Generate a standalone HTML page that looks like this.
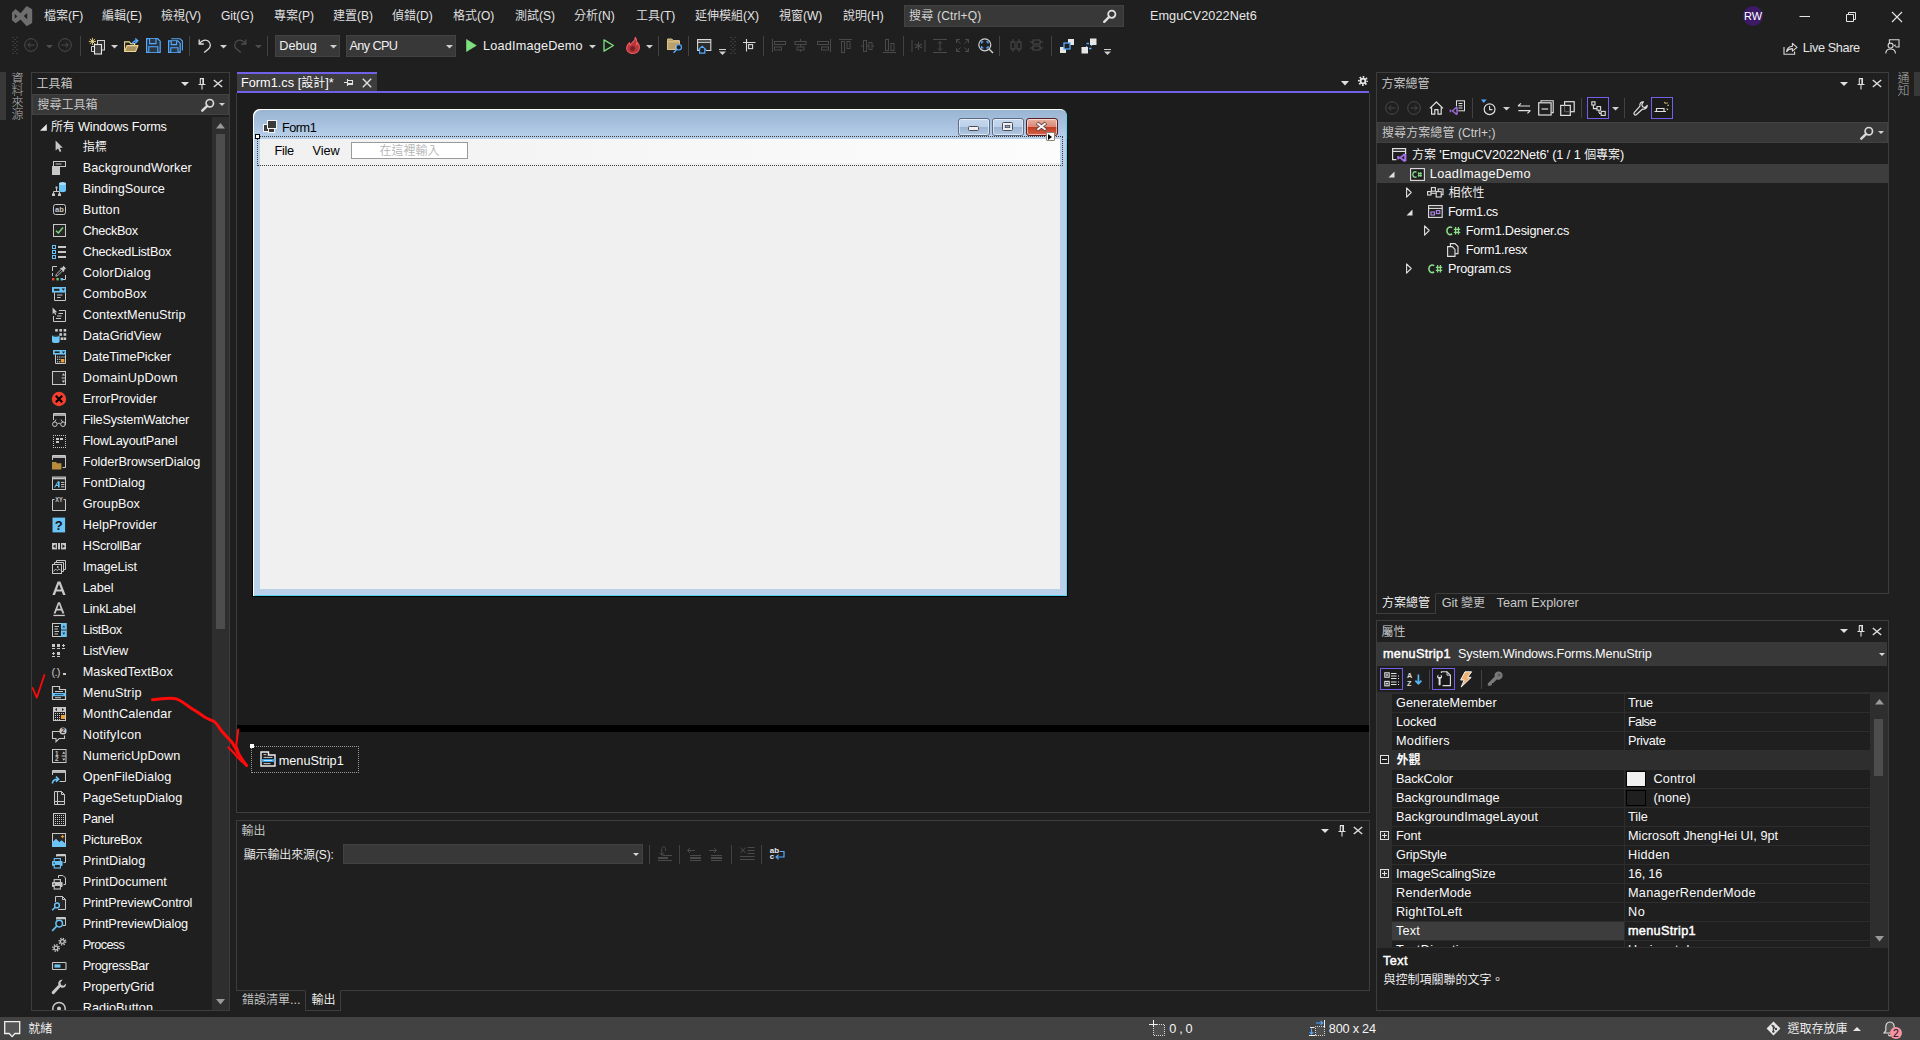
<!DOCTYPE html>
<html lang="zh-Hant"><head><meta charset="utf-8"><title>EmguCV2022Net6 - Microsoft Visual Studio</title><style>
html,body{margin:0;padding:0}
body{width:1920px;height:1040px;background:#1f1f1f;position:relative;overflow:hidden;font-family:"Liberation Sans","Noto Sans CJK TC",sans-serif;font-size:12.7px;color:#fafafa}
.a{position:absolute;box-sizing:border-box}
.t{white-space:nowrap;line-height:16px;height:16px}
.c{font-size:12px;font-weight:350}
svg{overflow:visible}
</style></head>
<body>
<svg class="a" style="left:12px;top:6px;" width="20" height="20" viewBox="0 0 20 20"><path d="M14.6 0 L20.2 3.3 V16.9 L14.6 20.2 L8.6 13.4 L3.6 17.2 L0 14.2 V6.4 L3.6 3.1 L8.6 7.2 Z M15.2 7 L11.8 10.1 L15.2 13.2 Z M2.8 8 V12.6 L5.3 10.3 Z" fill="#6e6e6e" fill-rule="evenodd"/></svg>
<span class="a t" style="left:44px;top:7.5px;color:#e6e6e6;font-size:12px;"><span class="c">檔案</span>(F)</span>
<span class="a t" style="left:102px;top:7.5px;color:#e6e6e6;font-size:12px;"><span class="c">編輯</span>(E)</span>
<span class="a t" style="left:161px;top:7.5px;color:#e6e6e6;font-size:12px;"><span class="c">檢視</span>(V)</span>
<span class="a t" style="left:221px;top:7.5px;color:#e6e6e6;font-size:12px;">Git(G)</span>
<span class="a t" style="left:274px;top:7.5px;color:#e6e6e6;font-size:12px;"><span class="c">專案</span>(P)</span>
<span class="a t" style="left:333px;top:7.5px;color:#e6e6e6;font-size:12px;"><span class="c">建置</span>(B)</span>
<span class="a t" style="left:392px;top:7.5px;color:#e6e6e6;font-size:12px;"><span class="c">偵錯</span>(D)</span>
<span class="a t" style="left:453px;top:7.5px;color:#e6e6e6;font-size:12px;"><span class="c">格式</span>(O)</span>
<span class="a t" style="left:515px;top:7.5px;color:#e6e6e6;font-size:12px;"><span class="c">測試</span>(S)</span>
<span class="a t" style="left:574px;top:7.5px;color:#e6e6e6;font-size:12px;"><span class="c">分析</span>(N)</span>
<span class="a t" style="left:636px;top:7.5px;color:#e6e6e6;font-size:12px;"><span class="c">工具</span>(T)</span>
<span class="a t" style="left:695px;top:7.5px;color:#e6e6e6;font-size:12px;"><span class="c">延伸模組</span>(X)</span>
<span class="a t" style="left:779px;top:7.5px;color:#e6e6e6;font-size:12px;"><span class="c">視窗</span>(W)</span>
<span class="a t" style="left:843px;top:7.5px;color:#e6e6e6;font-size:12px;"><span class="c">說明</span>(H)</span>
<div class="a" style="left:904px;top:5px;width:220px;height:22px;background:#383838;border:1px solid #424242;"></div>
<span class="a t" style="left:909.6px;top:7.5px;color:#d8d8d8;font-size:12px;letter-spacing:0.186px;margin-left:-0.5px;"><span class="c">搜尋</span> (Ctrl+Q)</span>
<svg class="a" style="left:1103px;top:9px;" width="14" height="14" viewBox="0 0 14 14"><circle cx="8.8" cy="5.2" r="3.6" fill="none" stroke="#e0e0e0" stroke-width="1.8"/><path d="M6.2 7.8 L1.2 12.8" stroke="#e0e0e0" stroke-width="2.4" stroke-linecap="round"/></svg>
<span class="a t" style="left:1150.4px;top:7.5px;color:#e6e6e6;letter-spacing:0.079px;margin-left:-0.5px;">EmguCV2022Net6</span>
<div class="a" style="left:1743px;top:6px;width:20px;height:20px;background:#3c1a66;border-radius:50%"></div>
<span class="a t" style="left:1743px;top:8px;color:#ffffff;font-size:11px;width:20px;text-align:center">RW</span>
<svg class="a" style="left:1799px;top:10px;" width="12" height="12" viewBox="0 0 12 12"><path d="M0.5 6.5 H11" stroke="#e6e6e6" stroke-width="1"/></svg>
<svg class="a" style="left:1845px;top:10px;" width="13" height="13" viewBox="0 0 13 13"><path d="M1.5 4.5 H8.5 V11.5 H1.5 Z M3.5 4.5 V2.5 H10.5 V9.5 H8.5" fill="none" stroke="#e6e6e6" stroke-width="1"/></svg>
<svg class="a" style="left:1891px;top:11px;" width="12" height="12" viewBox="0 0 12 12"><path d="M1 1 L11 11 M11 1 L1 11" stroke="#e6e6e6" stroke-width="1.1"/></svg>
<svg class="a" style="left:12px;top:37px;" width="6" height="18" viewBox="0 0 6 18"><rect x="0.5" y="0" width="1" height="1" fill="#5a5a5a"/><rect x="4.5" y="0" width="1" height="1" fill="#5a5a5a"/><rect x="2.5" y="2" width="1" height="1" fill="#5a5a5a"/><rect x="0.5" y="4" width="1" height="1" fill="#5a5a5a"/><rect x="4.5" y="4" width="1" height="1" fill="#5a5a5a"/><rect x="2.5" y="6" width="1" height="1" fill="#5a5a5a"/><rect x="0.5" y="8" width="1" height="1" fill="#5a5a5a"/><rect x="4.5" y="8" width="1" height="1" fill="#5a5a5a"/><rect x="2.5" y="10" width="1" height="1" fill="#5a5a5a"/><rect x="0.5" y="12" width="1" height="1" fill="#5a5a5a"/><rect x="4.5" y="12" width="1" height="1" fill="#5a5a5a"/><rect x="2.5" y="14" width="1" height="1" fill="#5a5a5a"/><rect x="0.5" y="16" width="1" height="1" fill="#5a5a5a"/><rect x="4.5" y="16" width="1" height="1" fill="#5a5a5a"/></svg>
<svg class="a" style="left:24px;top:38px;" width="14" height="14" viewBox="0 0 14 14"><circle cx="7" cy="7" r="6.3" fill="none" stroke="#4d4d4d"/><path d="M10.5 7 H3.8 M6.3 4.3 L3.6 7 L6.3 9.7" fill="none" stroke="#4d4d4d"/></svg>
<svg class="a" style="left:46px;top:45px;" width="7" height="4" viewBox="0 0 7 4"><path d="M0 0 H7 L3.5 3.5 Z" fill="#4d4d4d"/></svg>
<svg class="a" style="left:58px;top:38px;" width="14" height="14" viewBox="0 0 14 14"><circle cx="7" cy="7" r="6.3" fill="none" stroke="#4d4d4d"/><path d="M3.5 7 H10.2 M7.7 4.3 L10.4 7 L7.7 9.7" fill="none" stroke="#4d4d4d"/></svg>
<div class="a" style="left:80px;top:36px;width:1px;height:20px;background:#424242;"></div>
<svg class="a" style="left:89px;top:37px;" width="17" height="18" viewBox="0 0 17 18"><path d="M3.4 0.8 V8 M-0.2 4.4 H7 M0.9 1.9 L5.9 6.9 M5.9 1.9 L0.9 6.9" stroke="#f0dc8c" stroke-width="0.9"/><rect x="8.5" y="3.5" width="7" height="9.5" fill="#2e2e2e" stroke="#d0d0d0"/><path d="M5 9.5 H2.5 V14.5 H5.5" fill="none" stroke="#d0d0d0"/><rect x="5.5" y="7.5" width="7" height="9.5" fill="#3a3a3a" stroke="#e8e8e8" stroke-width="1.1"/></svg>
<svg class="a" style="left:111px;top:45px;" width="7" height="4" viewBox="0 0 7 4"><path d="M0 0 H7 L3.5 3.5 Z" fill="#d0d0d0"/></svg>
<svg class="a" style="left:124px;top:37px;" width="16" height="16" viewBox="0 0 16 16"><path d="M0.6 14.4 V4.9 H5.4 L6.8 6.6 H10.6 V8.6" fill="none" stroke="#f0d890" stroke-width="1.1"/><path d="M0.7 14.5 L3 8.6 H14 L11.6 14.5 Z" fill="#a89060" stroke="#f0d890" stroke-width="1.1" stroke-linejoin="round"/><path d="M8.4 7.4 C8.4 5 10 3.8 13 3.8 M11.2 1.4 L13.8 3.8 L11.2 6.2" fill="none" stroke="#55aaff" stroke-width="1.4"/></svg>
<svg class="a" style="left:146px;top:38px;" width="15" height="15" viewBox="0 0 15 15"><path d="M0.6 0.6 H11.6 L14.2 3.2 V14.4 H0.6 Z" fill="#263442" stroke="#55aaff" stroke-width="1.2"/><path d="M3.6 0.8 V5.6 H10 V0.8" fill="#2a3844" stroke="#55aaff" stroke-width="1.1"/><path d="M2.8 14.2 V8.8 H11.8 V14.2" fill="#2a3844" stroke="#55aaff" stroke-width="1.1"/></svg>
<svg class="a" style="left:168px;top:38px;" width="15" height="15" viewBox="0 0 15 15"><path d="M3.2 0.7 H12 L14.4 3 V12.6" fill="none" stroke="#55aaff" stroke-width="1.1"/><path d="M0.6 2.8 H9.8 L12.2 5.2 V14.4 H0.6 Z" fill="#263442" stroke="#55aaff" stroke-width="1.2"/><path d="M3.2 3 V6.6 H8.6 V3 M2.8 14.2 V9.8 H10 V14.2" fill="#2a3844" stroke="#55aaff" stroke-width="1.1"/></svg>
<div class="a" style="left:189px;top:36px;width:1px;height:20px;background:#424242;"></div>
<svg class="a" style="left:198px;top:38px;" width="14" height="15" viewBox="0 0 14 15"><path d="M1.2 1.5 V6 H5.8" fill="none" stroke="#e0e0e0" stroke-width="1.3"/><path d="M1.6 5.6 C3.5 2.2 8 1 10.8 3.6 C13.2 6 12.6 9 10.4 11 L6.2 14.5" fill="none" stroke="#e0e0e0" stroke-width="1.3"/></svg>
<svg class="a" style="left:220px;top:45px;" width="7" height="4" viewBox="0 0 7 4"><path d="M0 0 H7 L3.5 3.5 Z" fill="#d0d0d0"/></svg>
<svg class="a" style="left:233px;top:38px;" width="14" height="15" viewBox="0 0 14 15"><path d="M12.8 1.5 V6 H8.2" fill="none" stroke="#4d4d4d" stroke-width="1.3"/><path d="M12.4 5.6 C10.5 2.2 6 1 3.2 3.6 C0.8 6 1.4 9 3.6 11 L7.8 14.5" fill="none" stroke="#4d4d4d" stroke-width="1.3"/></svg>
<svg class="a" style="left:255px;top:45px;" width="7" height="4" viewBox="0 0 7 4"><path d="M0 0 H7 L3.5 3.5 Z" fill="#4d4d4d"/></svg>
<div class="a" style="left:267px;top:36px;width:1px;height:20px;background:#424242;"></div>
<div class="a" style="left:275px;top:35px;width:65px;height:22px;background:#383838;border:1px solid #424242;"></div>
<span class="a t" style="left:279.7px;top:37.5px;color:#f0f0f0;letter-spacing:0.042px;margin-left:-0.5px;">Debug</span>
<svg class="a" style="left:330px;top:45px;" width="7" height="4" viewBox="0 0 7 4"><path d="M0 0 H7 L3.5 3.5 Z" fill="#d0d0d0"/></svg>
<div class="a" style="left:346px;top:35px;width:110px;height:22px;background:#383838;border:1px solid #424242;"></div>
<span class="a t" style="left:350px;top:37.5px;color:#f0f0f0;letter-spacing:-0.627px;margin-left:-0.5px;">Any CPU</span>
<svg class="a" style="left:446px;top:45px;" width="7" height="4" viewBox="0 0 7 4"><path d="M0 0 H7 L3.5 3.5 Z" fill="#d0d0d0"/></svg>
<svg class="a" style="left:466px;top:39px;" width="11" height="13" viewBox="0 0 11 13"><path d="M0.5 0.5 L10.3 6.5 L0.5 12.5 Z" fill="#7fe07f" stroke="#7fe07f" stroke-width="0.6" stroke-linejoin="round"/></svg>
<span class="a t" style="left:483.6px;top:37.5px;color:#f0f0f0;letter-spacing:0.181px;margin-left:-0.5px;">LoadImageDemo</span>
<svg class="a" style="left:589px;top:45px;" width="7" height="4" viewBox="0 0 7 4"><path d="M0 0 H7 L3.5 3.5 Z" fill="#d0d0d0"/></svg>
<svg class="a" style="left:603px;top:39px;" width="12" height="13" viewBox="0 0 12 13"><path d="M1 0.9 L10.4 6.5 L1 12.1 Z" fill="none" stroke="#7fe07f" stroke-width="1.3" stroke-linejoin="round"/></svg>
<svg class="a" style="left:626px;top:37px;" width="14" height="17" viewBox="0 0 14 17"><path d="M9.2 0.3 C9.6 2.4 8.4 3.6 6.8 5 C5.6 6 4.6 6.8 4.3 8 C3.6 7.4 3.4 6.6 3.5 5.6 C1.6 7.2 0.5 9.2 0.6 11.2 C0.8 14.4 3.6 16.5 7 16.5 C10.6 16.5 13.3 14.2 13.4 10.6 C13.5 8.4 12.6 6.8 11.6 5.6 C11.6 6.8 11.2 7.6 10.4 8 C11 5.2 10.8 2.2 9.2 0.3 Z" fill="#b5363c" stroke="#f05a5f" stroke-width="1.1" stroke-linejoin="round"/><ellipse cx="6.6" cy="11.6" rx="2.3" ry="2.6" fill="#7a1f26"/></svg>
<svg class="a" style="left:646px;top:45px;" width="7" height="4" viewBox="0 0 7 4"><path d="M0 0 H7 L3.5 3.5 Z" fill="#d0d0d0"/></svg>
<div class="a" style="left:658px;top:36px;width:1px;height:20px;background:#424242;"></div>
<svg class="a" style="left:667px;top:38px;" width="16" height="16" viewBox="0 0 16 16"><path d="M0.6 11.5 V1 H4.8 L6.3 2.6 H12.4 V6" fill="#b9a06c" stroke="#dcc48e"/><path d="M0.6 11.5 H8 V4 H0.6 Z" fill="#b9a06c" stroke="#dcc48e"/><path d="M0.6 3.8 H12.4 V8 H8.5 V11.5 H0.6Z" fill="#b9a06c" stroke="#dcc48e"/><circle cx="11.8" cy="9.3" r="2.7" fill="#1f1f1f" stroke="#55aaff" stroke-width="1.2"/><path d="M9.8 11.4 L6.6 14.8" stroke="#55aaff" stroke-width="1.4"/></svg>
<div class="a" style="left:688px;top:36px;width:1px;height:20px;background:#424242;"></div>
<svg class="a" style="left:697px;top:39px;" width="15" height="15" viewBox="0 0 15 15"><path d="M3 11.5 H0.6 V0.6 H13.8 V11.5 H8.6" fill="#2b2b2b" stroke="#d8d8d8" stroke-width="1.1"/><path d="M0.6 3.3 H13.8" stroke="#d8d8d8" stroke-width="1.1"/><path d="M1.4 10.6 L5.2 7.2 L9 10.6 M2.6 10 V14.2 H7.8 V10" fill="#1f1f1f" stroke="#55aaff" stroke-width="1.2"/></svg>
<svg class="a" style="left:719px;top:49px;" width="7" height="6" viewBox="0 0 7 6"><path d="M0 0.5 H7" stroke="#d0d0d0"/><path d="M0 2.5 H7 L3.5 6 Z" fill="#d0d0d0"/></svg>
<svg class="a" style="left:730px;top:37px;" width="6" height="18" viewBox="0 0 6 18"><rect x="0.5" y="0" width="1" height="1" fill="#5a5a5a"/><rect x="4.5" y="0" width="1" height="1" fill="#5a5a5a"/><rect x="2.5" y="2" width="1" height="1" fill="#5a5a5a"/><rect x="0.5" y="4" width="1" height="1" fill="#5a5a5a"/><rect x="4.5" y="4" width="1" height="1" fill="#5a5a5a"/><rect x="2.5" y="6" width="1" height="1" fill="#5a5a5a"/><rect x="0.5" y="8" width="1" height="1" fill="#5a5a5a"/><rect x="4.5" y="8" width="1" height="1" fill="#5a5a5a"/><rect x="2.5" y="10" width="1" height="1" fill="#5a5a5a"/><rect x="0.5" y="12" width="1" height="1" fill="#5a5a5a"/><rect x="4.5" y="12" width="1" height="1" fill="#5a5a5a"/><rect x="2.5" y="14" width="1" height="1" fill="#5a5a5a"/><rect x="0.5" y="16" width="1" height="1" fill="#5a5a5a"/><rect x="4.5" y="16" width="1" height="1" fill="#5a5a5a"/></svg>
<svg class="a" style="left:743px;top:39px;" width="13" height="13" viewBox="0 0 13 13"><path d="M0 3.5 H12.5 M3.5 0 V12.5" stroke="#d8d8d8" stroke-width="1.1"/><rect x="5.6" y="5.6" width="4" height="4" fill="none" stroke="#d8d8d8" stroke-width="1.1"/></svg>
<div class="a" style="left:763px;top:36px;width:1px;height:20px;background:#424242;"></div>
<svg class="a" style="left:772px;top:39px;" width="15" height="13" viewBox="0 0 15 13"><path d="M0.5 0 V13" stroke="#4a4a4a"/><rect x="2.5" y="2.5" width="11" height="3" fill="none" stroke="#4a4a4a"/><rect x="2.5" y="8" width="7" height="3" fill="none" stroke="#4a4a4a"/></svg>
<svg class="a" style="left:794px;top:39px;" width="13" height="13" viewBox="0 0 13 13"><path d="M6.5 0 V13" stroke="#4a4a4a"/><rect x="1" y="2.5" width="11" height="3" fill="#1f1f1f" stroke="#4a4a4a"/><rect x="3" y="8" width="7" height="3" fill="#1f1f1f" stroke="#4a4a4a"/></svg>
<svg class="a" style="left:816px;top:39px;" width="15" height="13" viewBox="0 0 15 13"><path d="M14.5 0 V13" stroke="#4a4a4a"/><rect x="1.5" y="2.5" width="11" height="3" fill="none" stroke="#4a4a4a"/><rect x="5.5" y="8" width="7" height="3" fill="none" stroke="#4a4a4a"/></svg>
<svg class="a" style="left:839px;top:39px;" width="13" height="14" viewBox="0 0 13 14"><path d="M0 0.5 H13" stroke="#4a4a4a"/><rect x="2.5" y="2.5" width="3" height="11" fill="none" stroke="#4a4a4a"/><rect x="8" y="2.5" width="3" height="7" fill="none" stroke="#4a4a4a"/></svg>
<svg class="a" style="left:861px;top:39px;" width="13" height="14" viewBox="0 0 13 14"><path d="M0 7 H13" stroke="#4a4a4a"/><rect x="2.5" y="1.5" width="3" height="11" fill="#1f1f1f" stroke="#4a4a4a"/><rect x="8" y="3.5" width="3" height="7" fill="#1f1f1f" stroke="#4a4a4a"/></svg>
<svg class="a" style="left:883px;top:39px;" width="13" height="14" viewBox="0 0 13 14"><path d="M0 13.5 H13" stroke="#4a4a4a"/><rect x="2.5" y="0.5" width="3" height="11" fill="none" stroke="#4a4a4a"/><rect x="8" y="4.5" width="3" height="7" fill="none" stroke="#4a4a4a"/></svg>
<div class="a" style="left:903px;top:36px;width:1px;height:20px;background:#424242;"></div>
<svg class="a" style="left:911px;top:40px;" width="15" height="12" viewBox="0 0 15 12"><path d="M1 0 V12 M14 0 V12" stroke="#4a4a4a"/><path d="M7.5 2 V10 M4 4 L11 8 M11 4 L4 8" stroke="#4a4a4a" stroke-width="1.1"/></svg>
<svg class="a" style="left:933px;top:39px;" width="14" height="14" viewBox="0 0 14 14"><path d="M0 0.5 H14 M0 13.5 H14 M7 2.5 V11.5 M5 4.5 L7 2.5 L9 4.5 M5 9.5 L7 11.5 L9 9.5" fill="none" stroke="#4a4a4a"/></svg>
<svg class="a" style="left:956px;top:39px;" width="13" height="13" viewBox="0 0 13 13"><path d="M0.5 4 V0.5 H4 M9 0.5 H12.5 V4 M12.5 9 V12.5 H9 M4 12.5 H0.5 V9 M0.5 0.5 L4.5 4.5 M12.5 0.5 L8.5 4.5 M12.5 12.5 L8.5 8.5 M0.5 12.5 L4.5 8.5" fill="none" stroke="#4a4a4a"/></svg>
<svg class="a" style="left:978px;top:38px;" width="16" height="16" viewBox="0 0 16 16"><circle cx="6.8" cy="6.8" r="6" fill="none" stroke="#d0d0d0" stroke-width="1.2"/><path d="M11 11 L15 15" stroke="#d0d0d0" stroke-width="1.4"/><path d="M3.6 5.6 V3.8 H5.4 M8.2 3.8 H10 V5.6 M10 8 V9.8 H8.2 M5.4 9.8 H3.6 V8" fill="none" stroke="#55aaff" stroke-width="1.3"/></svg>
<div class="a" style="left:999px;top:36px;width:1px;height:20px;background:#424242;"></div>
<svg class="a" style="left:1010px;top:39px;" width="12" height="13" viewBox="0 0 12 13"><path d="M3 0 V13 M9 0 V13" stroke="#4a4a4a"/><rect x="1" y="3" width="4" height="7" fill="#1f1f1f" stroke="#4a4a4a"/><rect x="7" y="3" width="4" height="7" fill="#1f1f1f" stroke="#4a4a4a"/></svg>
<svg class="a" style="left:1030px;top:39px;" width="13" height="12" viewBox="0 0 13 12"><path d="M0 3 H13 M0 9 H13" stroke="#4a4a4a"/><rect x="3" y="1" width="7" height="4" fill="#1f1f1f" stroke="#4a4a4a"/><rect x="3" y="7" width="7" height="4" fill="#1f1f1f" stroke="#4a4a4a"/></svg>
<div class="a" style="left:1051px;top:36px;width:1px;height:20px;background:#424242;"></div>
<svg class="a" style="left:1059px;top:38px;" width="16" height="16" viewBox="0 0 16 16"><rect x="9" y="1" width="6" height="6" fill="#e6e6e6"/><rect x="1" y="9" width="6" height="6" fill="#e6e6e6"/><rect x="5" y="5" width="6" height="6" fill="#1f1f1f" stroke="#55aaff" stroke-width="1.3"/></svg>
<svg class="a" style="left:1081px;top:38px;" width="16" height="16" viewBox="0 0 16 16"><rect x="5.5" y="5.5" width="5" height="5" fill="none" stroke="#55aaff" stroke-width="1.3" stroke-dasharray="2.5 2.5"/><rect x="9" y="0.5" width="6.5" height="6.5" fill="#e6e6e6"/><rect x="0.5" y="9" width="6.5" height="6.5" fill="#e6e6e6"/></svg>
<svg class="a" style="left:1104px;top:49px;" width="7" height="6" viewBox="0 0 7 6"><path d="M0 0.5 H7" stroke="#d0d0d0"/><path d="M0 2.5 H7 L3.5 6 Z" fill="#d0d0d0"/></svg>
<svg class="a" style="left:1783px;top:42px;" width="15" height="13" viewBox="0 0 15 13"><path d="M1 5 V12.3 H11.6 V9.6" fill="none" stroke="#d8d8d8" stroke-width="1.1"/><path d="M3.6 9.6 C4 6.2 6.2 4.4 9.4 4.2 V1.4 L14 5.4 L9.4 9.2 V6.6 C7 6.6 5 7.4 3.6 9.6 Z" fill="none" stroke="#d8d8d8" stroke-width="1.1" stroke-linejoin="round"/></svg>
<span class="a t" style="left:1803.3px;top:39.5px;color:#e6e6e6;letter-spacing:-0.366px;margin-left:-0.5px;">Live Share</span>
<svg class="a" style="left:1885px;top:39px;" width="15" height="15" viewBox="0 0 15 15"><path d="M4.4 5 V0.8 H14 V8 H10.6" fill="none" stroke="#d8d8d8" stroke-width="1.1"/><circle cx="5.6" cy="6.6" r="2.5" fill="#1f1f1f" stroke="#d8d8d8" stroke-width="1.1"/><path d="M0.8 14.4 C0.8 8.6 10.4 8.6 10.4 14.4" fill="none" stroke="#d8d8d8" stroke-width="1.1"/><path d="M8.6 6.6 L10.6 8 V5.2Z" fill="#d8d8d8"/></svg>
<div class="a" style="left:0px;top:72px;width:6px;height:48px;background:#383838;"></div>
<span class="a t" style="left:10px;top:72px;width:12px;height:48px;line-height:12px;font-size:12px;font-weight:300;color:#b0b0b0;writing-mode:vertical-rl;text-orientation:upright;white-space:nowrap">資料來源</span>
<div class="a" style="left:31px;top:72px;width:199px;height:939px;border:1px solid #3d3d3d;"></div>
<span class="a t" style="left:36.5px;top:75.5px;color:#d0d0d0;"><span class="c">工具箱</span></span>
<svg class="a" style="left:181px;top:81.5px;" width="8" height="4" viewBox="0 0 8 4"><path d="M0 0 H8 L4 4 Z" fill="#e0e0e0"/></svg>
<svg class="a" style="left:197.5px;top:77.5px;" width="8" height="12" viewBox="0 0 8 12"><path d="M2 0.6 H6 M2.3 0.6 V6 M5.4 0.6 V6 M0.5 6.5 H7.5 M4 6.5 V11.5" fill="none" stroke="#e0e0e0" stroke-width="1.1"/><rect x="4.4" y="1" width="1.4" height="5" fill="#e0e0e0"/></svg>
<svg class="a" style="left:213px;top:79px;" width="10" height="9" viewBox="0 0 10 9"><path d="M0.8 0.9 L9.2 8.1 M9.2 0.9 L0.8 8.1" stroke="#e0e0e0" stroke-width="1.35"/></svg>
<div class="a" style="left:32px;top:94px;width:197px;height:21px;background:#383838;border:1px solid #424242;"></div>
<span class="a t" style="left:37.5px;top:96.5px;color:#d0d0d0;"><span class="c">搜尋工具箱</span></span>
<svg class="a" style="left:200.5px;top:97.5px;" width="14" height="14" viewBox="0 0 14 14"><circle cx="8.8" cy="5.2" r="3.7" fill="none" stroke="#d8d8d8" stroke-width="1.7"/><path d="M6.2 7.8 L1.3 12.7" stroke="#d8d8d8" stroke-width="2.5" stroke-linecap="round"/></svg>
<svg class="a" style="left:219px;top:103px;" width="6" height="3" viewBox="0 0 6 3"><path d="M0 0 H6 L3 3 Z" fill="#d0d0d0"/></svg>
<div class="a" style="left:212px;top:117px;width:17px;height:893px;background:#2e2e2e;"></div>
<svg class="a" style="left:216px;top:122.5px;" width="9" height="5.5" viewBox="0 0 9 5.5"><path d="M0 5.5 L4.5 0 L9 5.5 Z" fill="#999999"/></svg>
<div class="a" style="left:216px;top:134px;width:9px;height:495px;background:#4d4d4d;"></div>
<svg class="a" style="left:216px;top:999px;" width="9" height="5.5" viewBox="0 0 9 5.5"><path d="M0 0 L4.5 5.5 L9 0 Z" fill="#999999"/></svg>
<svg class="a" style="left:39.5px;top:123.5px;" width="7" height="7" viewBox="0 0 7 7"><path d="M6.8 0 V6.8 H0 Z" fill="#e6e6e6"/></svg>
<span class="a t" style="left:51.5px;top:118.5px;color:#fafafa;letter-spacing:-0.168px;margin-left:-0.5px;"><span class="c">所有</span> Windows Forms</span>
<div class="a" style="left:0;top:0;width:212px;height:1010px;overflow:hidden"><svg class="a" style="left:51px;top:139px;" width="16" height="16" viewBox="0 0 16 16"><path d="M4.6 1.6 V11.6 L7 9.4 L8.8 13 L10.4 12.2 L8.7 8.8 H11.8 Z" fill="#c8c8c8"/></svg><span class="a t" style="left:83.25px;top:138.5px;color:#fafafa;letter-spacing:0.017px;margin-left:-0.5px;"><span class="c">指標</span></span><svg class="a" style="left:51px;top:160px;" width="16" height="16" viewBox="0 0 16 16"><rect x="2.5" y="1.5" width="12" height="5" fill="none" stroke="#c8c8c8" stroke-width="1"/><rect x="4.5" y="3.5" width="6" height="1" fill="#c8c8c8"/><rect x="1" y="6" width="8" height="9" fill="#c8c8c8"/></svg><span class="a t" style="left:83.25px;top:159.5px;color:#fafafa;letter-spacing:0.042px;margin-left:-0.5px;">BackgroundWorker</span><svg class="a" style="left:51px;top:181px;" width="16" height="16" viewBox="0 0 16 16"><path d="M8 2.5 V9.6 C8 11.8 15 11.8 15 9.6 V2.5" fill="#6cc3f5"/><ellipse cx="11.5" cy="2.6" rx="3.5" ry="1.6" fill="#a8dcfa"/><path d="M5.5 7 V10.5 M2.5 13 V10.5 H8.5 V13" fill="none" stroke="#c8c8c8" stroke-width="1"/><rect x="4.5" y="5.5" width="2" height="2" fill="#c8c8c8"/><rect x="1" y="12.5" width="3" height="2.5" fill="#c8c8c8"/><rect x="7" y="12.5" width="3" height="2.5" fill="#c8c8c8"/></svg><span class="a t" style="left:83.25px;top:180.5px;color:#fafafa;letter-spacing:-0.037px;margin-left:-0.5px;">BindingSource</span><svg class="a" style="left:51px;top:202px;" width="16" height="16" viewBox="0 0 16 16"><rect x="2.5" y="2.5" width="12" height="10" rx="2" fill="none" stroke="#c8c8c8" stroke-width="1"/><text x="8.5" y="10.3" font-size="7.5" font-weight="bold" text-anchor="middle" fill="#c8c8c8" font-family="Liberation Sans,sans-serif">ab</text></svg><span class="a t" style="left:83.25px;top:201.5px;color:#fafafa;letter-spacing:0.060px;margin-left:-0.5px;">Button</span><svg class="a" style="left:51px;top:223px;" width="16" height="16" viewBox="0 0 16 16"><rect x="2.5" y="1.5" width="12" height="12" fill="#262626" stroke="#c8c8c8"/><path d="M5 7.8 L7.4 10 L12 4.6" fill="none" stroke="#7fd67f" stroke-width="1.5"/></svg><span class="a t" style="left:83.25px;top:222.5px;color:#fafafa;letter-spacing:-0.347px;margin-left:-0.5px;">CheckBox</span><svg class="a" style="left:51px;top:244px;" width="16" height="16" viewBox="0 0 16 16"><rect x="1" y="1" width="4" height="4" fill="#6cc3f5"/><rect x="2" y="2" width="2" height="2" fill="#1f1f1f"/><rect x="7" y="2" width="8" height="2" fill="#c8c8c8"/><rect x="1" y="6" width="4" height="4" fill="#6cc3f5"/><rect x="2" y="7" width="2" height="2" fill="#1f1f1f"/><rect x="7" y="7" width="8" height="2" fill="#c8c8c8"/><rect x="1" y="11" width="4" height="4" fill="#6cc3f5"/><rect x="2" y="12" width="2" height="2" fill="#1f1f1f"/><rect x="7" y="12" width="8" height="2" fill="#c8c8c8"/></svg><span class="a t" style="left:83.25px;top:243.5px;color:#fafafa;letter-spacing:-0.242px;margin-left:-0.5px;">CheckedListBox</span><svg class="a" style="left:51px;top:265px;" width="16" height="16" viewBox="0 0 16 16"><path d="M1.5 6 V1.5 H6 M14.5 10 V14.5 H11" fill="none" stroke="#c8c8c8" stroke-width="1"/><path d="M1.5 8 V11" fill="none" stroke="#c8c8c8" stroke-width="1"/><path d="M12.5 0.8 L15 3.4 L13 5 L13.6 5.8 L12.4 7 L9 3.6 L10.2 2.4 L11 3 Z" fill="#c8c8c8"/><path d="M10 4.6 L5.4 9.2 L4.8 11.2 L6.8 10.6 L11.4 6" fill="#1f1f1f" stroke="#c8c8c8" stroke-width="0.9"/><rect x="1" y="13" width="2.4" height="2.4" fill="#f04040"/><rect x="5.4" y="13" width="2.4" height="2.4" fill="#5fd05f"/><rect x="9.6" y="13" width="2.4" height="2.4" fill="#6cc3f5"/></svg><span class="a t" style="left:83.25px;top:264.5px;color:#fafafa;letter-spacing:0.182px;margin-left:-0.5px;">ColorDialog</span><svg class="a" style="left:51px;top:286px;" width="16" height="16" viewBox="0 0 16 16"><rect x="1" y="1" width="14" height="5.6" fill="#6cc3f5"/><rect x="3" y="2.8" width="5.5" height="2" fill="#1f1f1f"/><path d="M10.6 2.6 H14 L12.3 4.8 Z" fill="#1f1f1f"/><path d="M3.5 6.5 V14.5 H14.5 V6.5" fill="none" stroke="#c8c8c8" stroke-width="1"/><path d="M6 9 H11.5 M6 11.5 H9.5" fill="none" stroke="#c8c8c8" stroke-width="1"/></svg><span class="a t" style="left:83.25px;top:285.5px;color:#fafafa;letter-spacing:0.161px;margin-left:-0.5px;">ComboBox</span><svg class="a" style="left:51px;top:307px;" width="16" height="16" viewBox="0 0 16 16"><path d="M8 3.5 H14.5 V14.5 H2.5 V9" fill="none" stroke="#c8c8c8" stroke-width="1"/><path d="M7.5 6.5 H12 M6 9 H10.5 M5 11.5 H10" fill="none" stroke="#c8c8c8" stroke-width="1"/><path d="M1.6 0.6 V7 L3.1 5.7 L4.3 8 L5.3 7.5 L4.2 5.3 H6.2 Z" fill="#c8c8c8"/></svg><span class="a t" style="left:83.25px;top:306.5px;color:#fafafa;letter-spacing:0.077px;margin-left:-0.5px;">ContextMenuStrip</span><svg class="a" style="left:51px;top:328px;" width="16" height="16" viewBox="0 0 16 16"><rect x="4.2" y="1" width="2.6" height="2.6" fill="#c8c8c8"/><rect x="8.4" y="1" width="2.6" height="2.6" fill="#c8c8c8"/><rect x="12.6" y="1" width="2.6" height="2.6" fill="#c8c8c8"/><rect x="12.6" y="5.2" width="2.6" height="2.6" fill="#c8c8c8"/><rect x="8.4" y="5.2" width="2.6" height="2.6" fill="#c8c8c8"/><rect x="12.6" y="9.4" width="2.6" height="2.6" fill="#c8c8c8"/><rect x="9.6" y="9.4" width="2.6" height="2.6" fill="#c8c8c8"/><path d="M1 7.5 V13.4 C1 15.6 8.6 15.6 8.6 13.4 V7.5" fill="#6cc3f5"/><ellipse cx="4.8" cy="7.6" rx="3.3" ry="1.3" fill="#1f1f1f" opacity="0.75"/></svg><span class="a t" style="left:83.25px;top:327.5px;color:#fafafa;letter-spacing:0.021px;margin-left:-0.5px;">DataGridView</span><svg class="a" style="left:51px;top:349px;" width="16" height="16" viewBox="0 0 16 16"><rect x="2" y="1" width="13" height="4.6" fill="#6cc3f5"/><rect x="3.6" y="2.4" width="5" height="1.6" fill="#1f1f1f"/><path d="M10.8 2.4 H14 L12.4 4.4 Z" fill="#1f1f1f"/><path d="M4.5 5.5 V14.5 H14.5 V5.5" fill="none" stroke="#c8c8c8" stroke-width="1"/><rect x="10" y="10" width="3.4" height="3.4" fill="#f0a030"/><rect x="6" y="7.4" width="1.2" height="1.2" fill="#c8c8c8"/><rect x="8.2" y="7.4" width="1.2" height="1.2" fill="#c8c8c8"/><rect x="10.4" y="7.4" width="1.2" height="1.2" fill="#c8c8c8"/><rect x="12.4" y="7.4" width="1.2" height="1.2" fill="#c8c8c8"/><rect x="6" y="9.8" width="1.2" height="1.2" fill="#c8c8c8"/><rect x="8.2" y="9.8" width="1.2" height="1.2" fill="#c8c8c8"/><rect x="6" y="12.2" width="1.2" height="1.2" fill="#c8c8c8"/><rect x="8.2" y="12.2" width="1.2" height="1.2" fill="#c8c8c8"/></svg><span class="a t" style="left:83.25px;top:348.5px;color:#fafafa;letter-spacing:-0.106px;margin-left:-0.5px;">DateTimePicker</span><svg class="a" style="left:51px;top:370px;" width="16" height="16" viewBox="0 0 16 16"><rect x="1.5" y="1.5" width="13" height="13" fill="#2a2a2a" stroke="#c8c8c8"/><path d="M10.5 8 H14.5" fill="none" stroke="#c8c8c8" stroke-width="1"/><path d="M10.8 5.6 H14.2 L12.5 3.2 Z M10.8 10.4 H14.2 L12.5 12.8 Z" fill="#c8c8c8"/><path d="M10 2 V14" stroke="#1f1f1f" stroke-width="0.6"/></svg><span class="a t" style="left:83.25px;top:369.5px;color:#fafafa;letter-spacing:0.223px;margin-left:-0.5px;">DomainUpDown</span><svg class="a" style="left:51px;top:391px;" width="16" height="16" viewBox="0 0 16 16"><circle cx="8" cy="8" r="7.2" fill="#f43e30"/><path d="M4.8 4.8 L11.2 11.2 M11.2 4.8 L4.8 11.2" stroke="#000" stroke-width="2.1"/></svg><span class="a t" style="left:83.25px;top:390.5px;color:#fafafa;letter-spacing:-0.107px;margin-left:-0.5px;">ErrorProvider</span><svg class="a" style="left:51px;top:412px;" width="16" height="16" viewBox="0 0 16 16"><path d="M2.5 8 V1.5 H14.5 V12.5 H13.6" fill="none" stroke="#c8c8c8" stroke-width="1"/><path d="M2.5 3 H14.5" fill="none" stroke="#c8c8c8" stroke-width="1.6"/><path d="M3 10.5 L5 7.5 M12 10.5 L10 7.5 M6.4 11.8 C7.2 11 8.8 11 9.6 11.8" fill="none" stroke="#c8c8c8" stroke-width="1"/><circle cx="3.8" cy="12.2" r="2.3" fill="none" stroke="#c8c8c8" stroke-width="1"/><circle cx="12" cy="12.2" r="2.3" fill="none" stroke="#c8c8c8" stroke-width="1"/></svg><span class="a t" style="left:83.25px;top:411.5px;color:#fafafa;letter-spacing:-0.189px;margin-left:-0.5px;">FileSystemWatcher</span><svg class="a" style="left:51px;top:433px;" width="16" height="16" viewBox="0 0 16 16"><rect x="2" y="2" width="1" height="1" fill="#c8c8c8"/><rect x="4" y="2" width="1" height="1" fill="#c8c8c8"/><rect x="6" y="2" width="1" height="1" fill="#c8c8c8"/><rect x="8" y="2" width="1" height="1" fill="#c8c8c8"/><rect x="10" y="2" width="1" height="1" fill="#c8c8c8"/><rect x="12" y="2" width="1" height="1" fill="#c8c8c8"/><rect x="14" y="2" width="1" height="1" fill="#c8c8c8"/><rect x="2" y="14" width="1" height="1" fill="#c8c8c8"/><rect x="4" y="14" width="1" height="1" fill="#c8c8c8"/><rect x="6" y="14" width="1" height="1" fill="#c8c8c8"/><rect x="8" y="14" width="1" height="1" fill="#c8c8c8"/><rect x="10" y="14" width="1" height="1" fill="#c8c8c8"/><rect x="12" y="14" width="1" height="1" fill="#c8c8c8"/><rect x="14" y="14" width="1" height="1" fill="#c8c8c8"/><rect x="2" y="4" width="1" height="1" fill="#c8c8c8"/><rect x="2" y="6" width="1" height="1" fill="#c8c8c8"/><rect x="2" y="8" width="1" height="1" fill="#c8c8c8"/><rect x="2" y="10" width="1" height="1" fill="#c8c8c8"/><rect x="2" y="12" width="1" height="1" fill="#c8c8c8"/><rect x="14" y="4" width="1" height="1" fill="#c8c8c8"/><rect x="14" y="6" width="1" height="1" fill="#c8c8c8"/><rect x="14" y="8" width="1" height="1" fill="#c8c8c8"/><rect x="14" y="10" width="1" height="1" fill="#c8c8c8"/><rect x="14" y="12" width="1" height="1" fill="#c8c8c8"/><rect x="5" y="5" width="3" height="2" fill="#c8c8c8"/><rect x="9" y="5" width="3" height="2" fill="#c8c8c8"/><rect x="5" y="8" width="3" height="2" fill="#c8c8c8"/></svg><span class="a t" style="left:83.25px;top:432.5px;color:#fafafa;letter-spacing:-0.186px;margin-left:-0.5px;">FlowLayoutPanel</span><svg class="a" style="left:51px;top:454px;" width="16" height="16" viewBox="0 0 16 16"><path d="M1.5 6 V1.5 H14.5 V13.5 H11.5" fill="none" stroke="#c8c8c8" stroke-width="1"/><path d="M1.5 3 H14.5" fill="none" stroke="#c8c8c8" stroke-width="1.8"/><path d="M1 8 H5 L6 9.2 H10.4 V15.4 H1 Z" fill="#b88c3c"/></svg><span class="a t" style="left:83.25px;top:453.5px;color:#fafafa;letter-spacing:-0.048px;margin-left:-0.5px;">FolderBrowserDialog</span><svg class="a" style="left:51px;top:475px;" width="16" height="16" viewBox="0 0 16 16"><rect x="1.5" y="2" width="13" height="12.5" fill="none" stroke="#c8c8c8" stroke-width="1"/><path d="M1.5 3.4 H14.5" fill="none" stroke="#c8c8c8" stroke-width="1.8"/><path d="M3 12.4 L6.8 6.2 H8.6 V12.4 H7 V11 H5 L4.2 12.4 Z M7 9.8 V7.6 L5.7 9.8 Z" fill="#6cc3f5"/><path d="M10 7.4 H13.4 M10 9.6 H13.4 M10 11.8 H13.4" fill="none" stroke="#c8c8c8" stroke-width="1"/></svg><span class="a t" style="left:83.25px;top:474.5px;color:#fafafa;letter-spacing:0.119px;margin-left:-0.5px;">FontDialog</span><svg class="a" style="left:51px;top:496px;" width="16" height="16" viewBox="0 0 16 16"><path d="M3.5 3.5 H1.5 V14.5 H14.5 V3.5 H12.5" fill="#262626" stroke="#c8c8c8"/><text x="8" y="6.4" font-size="7" font-weight="bold" text-anchor="middle" fill="#c8c8c8" font-family="Liberation Sans,sans-serif" textLength="7.4" lengthAdjust="spacingAndGlyphs">XY</text></svg><span class="a t" style="left:83.25px;top:495.5px;color:#fafafa;letter-spacing:-0.009px;margin-left:-0.5px;">GroupBox</span><svg class="a" style="left:51px;top:517px;" width="16" height="16" viewBox="0 0 16 16"><rect x="1.5" y="0.6" width="12.6" height="14.8" fill="#6cc3f5"/><text x="7.8" y="12.6" font-size="13" font-weight="bold" text-anchor="middle" fill="#111" font-family="Liberation Sans,sans-serif">?</text></svg><span class="a t" style="left:83.25px;top:516.5px;color:#fafafa;letter-spacing:0.059px;margin-left:-0.5px;">HelpProvider</span><svg class="a" style="left:51px;top:538px;" width="16" height="16" viewBox="0 0 16 16"><rect x="1" y="5" width="5" height="6.4" fill="#c8c8c8"/><rect x="10" y="5" width="5" height="6.4" fill="#c8c8c8"/><rect x="7" y="5" width="2" height="6.4" fill="#c8c8c8"/><path d="M4.6 6.2 V10.2 L2 8.2 Z" fill="#1f1f1f"/><path d="M11.4 6.2 V10.2 L14 8.2 Z" fill="#1f1f1f"/></svg><span class="a t" style="left:83.25px;top:537.5px;color:#fafafa;letter-spacing:-0.234px;margin-left:-0.5px;">HScrollBar</span><svg class="a" style="left:51px;top:559px;" width="16" height="16" viewBox="0 0 16 16"><path d="M5.5 3.5 V1.5 H14.5 V10.5 H12.5" fill="none" stroke="#c8c8c8" stroke-width="1"/><path d="M3.5 5.5 V3.5 H12.5 V12.5 H10.5" fill="none" stroke="#c8c8c8" stroke-width="1"/><rect x="1.5" y="5.5" width="9" height="9" fill="none" stroke="#c8c8c8" stroke-width="1"/><path d="M2.5 12.5 L4.6 10 L6.2 11.6 L8 9.8 L9.6 11.4" fill="none" stroke="#c8c8c8" stroke-width="0.9"/><circle cx="6.8" cy="8" r="0.9" fill="#c8c8c8"/></svg><span class="a t" style="left:83.25px;top:558.5px;color:#fafafa;letter-spacing:-0.107px;margin-left:-0.5px;">ImageList</span><svg class="a" style="left:51px;top:580px;" width="16" height="16" viewBox="0 0 16 16"><path d="M1.4 15 L6.6 1.6 H9.4 L14.6 15 H12 L10.8 11.6 H5.2 L4 15 Z M6 9.6 H10 L8 4 Z" fill="#c8c8c8"/></svg><span class="a t" style="left:83.25px;top:579.5px;color:#fafafa;letter-spacing:-0.049px;margin-left:-0.5px;">Label</span><svg class="a" style="left:51px;top:601px;" width="16" height="16" viewBox="0 0 16 16"><path d="M2.6 12.4 L7 1.2 H9 L13.4 12.4 H11.4 L10.3 9.4 H5.7 L4.6 12.4 Z M6.3 7.8 H9.7 L8 3.2 Z" fill="#c8c8c8"/><rect x="2.4" y="13.8" width="11.4" height="1.3" fill="#c8c8c8"/></svg><span class="a t" style="left:83.25px;top:600.5px;color:#fafafa;letter-spacing:-0.170px;margin-left:-0.5px;">LinkLabel</span><svg class="a" style="left:51px;top:622px;" width="16" height="16" viewBox="0 0 16 16"><rect x="1.5" y="1.5" width="13.5" height="13" fill="none" stroke="#c8c8c8" stroke-width="1"/><rect x="10" y="1" width="5.5" height="14" fill="#6cc3f5"/><path d="M10 8 H15.5" stroke="#1f1f1f" stroke-width="0.9"/><path d="M11.2 5.6 H14.4 L12.8 3.2 Z M11.2 10.6 H14.4 L12.8 13 Z" fill="#1b4a6a"/><path d="M3.5 4.5 H8 M3.5 7 H7 M3.5 9.5 H8 M3.5 12 H7" fill="none" stroke="#c8c8c8" stroke-width="1.1"/></svg><span class="a t" style="left:83.25px;top:621.5px;color:#fafafa;letter-spacing:-0.366px;margin-left:-0.5px;">ListBox</span><svg class="a" style="left:51px;top:643px;" width="16" height="16" viewBox="0 0 16 16"><rect x="1" y="1" width="3" height="3" fill="#c8c8c8"/><rect x="6" y="1" width="3" height="3" fill="#c8c8c8"/><rect x="6" y="9" width="3" height="3" fill="#c8c8c8"/><rect x="1" y="5" width="3" height="1" fill="#c8c8c8"/><rect x="6" y="5" width="3" height="1" fill="#c8c8c8"/><rect x="11" y="5" width="3" height="1" fill="#c8c8c8"/><rect x="1" y="13" width="3" height="1" fill="#c8c8c8"/><rect x="6" y="13" width="3" height="1" fill="#c8c8c8"/><path d="M12.5 1 V4 M11 2.5 H14 M2.5 9 V12 M1 10.5 H4" fill="none" stroke="#c8c8c8" stroke-width="1"/></svg><span class="a t" style="left:83.25px;top:642.5px;color:#fafafa;letter-spacing:-0.246px;margin-left:-0.5px;">ListView</span><svg class="a" style="left:51px;top:664px;" width="16" height="16" viewBox="0 0 16 16"><text x="0.6" y="11.6" font-size="11" fill="#c8c8c8" font-family="Liberation Sans,sans-serif" letter-spacing="-0.8">(.)</text><rect x="12" y="9" width="3" height="2" fill="#c8c8c8"/></svg><span class="a t" style="left:83.25px;top:663.5px;color:#fafafa;letter-spacing:0.037px;margin-left:-0.5px;">MaskedTextBox</span><svg class="a" style="left:51px;top:685px;" width="16" height="16" viewBox="0 0 16 16"><path d="M1.5 14.5 V1.5 H8.5 V4.5 H14.5 V14.5 Z" fill="none" stroke="#c8c8c8" stroke-width="1.2"/><path d="M4 6.5 H12" fill="none" stroke="#c8c8c8" stroke-width="1"/><rect x="1" y="8" width="14" height="3.2" fill="#6cc3f5"/><rect x="3.6" y="9.1" width="8.8" height="1" fill="#1b4a6a"/><path d="M4 12.7 H10" fill="none" stroke="#c8c8c8" stroke-width="1"/></svg><span class="a t" style="left:83.25px;top:684.5px;color:#fafafa;letter-spacing:0.108px;margin-left:-0.5px;">MenuStrip</span><svg class="a" style="left:51px;top:706px;" width="16" height="16" viewBox="0 0 16 16"><rect x="2.5" y="1.5" width="12" height="13" fill="none" stroke="#c8c8c8"/><rect x="2" y="1" width="13" height="5" fill="#c8c8c8"/><path d="M6 2 V5 L4 3.5 Z M11 2 V5 L13 3.5 Z" fill="#1f1f1f"/><rect x="10" y="9" width="4" height="4" fill="#f0a030"/><rect x="4" y="7" width="1" height="1" fill="#c8c8c8"/><rect x="4" y="9" width="1" height="1" fill="#c8c8c8"/><rect x="4" y="11" width="1" height="1" fill="#c8c8c8"/><rect x="4" y="13" width="1" height="1" fill="#c8c8c8"/><rect x="6" y="7" width="1" height="1" fill="#c8c8c8"/><rect x="6" y="9" width="1" height="1" fill="#c8c8c8"/><rect x="6" y="11" width="1" height="1" fill="#c8c8c8"/><rect x="6" y="13" width="1" height="1" fill="#c8c8c8"/><rect x="8" y="7" width="1" height="1" fill="#c8c8c8"/><rect x="8" y="9" width="1" height="1" fill="#c8c8c8"/><rect x="8" y="11" width="1" height="1" fill="#c8c8c8"/><rect x="8" y="13" width="1" height="1" fill="#c8c8c8"/><rect x="10" y="7" width="1" height="1" fill="#c8c8c8"/><rect x="12" y="7" width="1" height="1" fill="#c8c8c8"/></svg><span class="a t" style="left:83.25px;top:705.5px;color:#fafafa;letter-spacing:0.177px;margin-left:-0.5px;">MonthCalendar</span><svg class="a" style="left:51px;top:727px;" width="16" height="16" viewBox="0 0 16 16"><path d="M9 4.5 H1.5 V11.5 H5 V14.6 L8.2 11.5 H13.5 V8.6" fill="none" stroke="#c8c8c8" stroke-width="1.1"/><circle cx="12" cy="4" r="3.6" fill="#c8c8c8"/><text x="12" y="6.4" font-size="6.6" font-weight="bold" text-anchor="middle" fill="#1f1f1f" font-family="Liberation Sans,sans-serif">2</text></svg><span class="a t" style="left:83.25px;top:726.5px;color:#fafafa;letter-spacing:0.238px;margin-left:-0.5px;">NotifyIcon</span><svg class="a" style="left:51px;top:748px;" width="16" height="16" viewBox="0 0 16 16"><rect x="1.5" y="1.5" width="13.5" height="13" fill="none" stroke="#c8c8c8" stroke-width="1"/><path d="M10.5 8 H15" fill="none" stroke="#c8c8c8" stroke-width="1"/><path d="M11.2 5.8 H14.4 L12.8 3.4 Z M11.2 10.4 H14.4 L12.8 12.8 Z" fill="#c8c8c8"/><text x="5.8" y="7.6" font-size="6.4" font-weight="bold" text-anchor="middle" fill="#c8c8c8" font-family="Liberation Sans,sans-serif">1</text><text x="5.8" y="13.4" font-size="6.4" font-weight="bold" text-anchor="middle" fill="#c8c8c8" font-family="Liberation Sans,sans-serif">2</text></svg><span class="a t" style="left:83.25px;top:747.5px;color:#fafafa;letter-spacing:0.147px;margin-left:-0.5px;">NumericUpDown</span><svg class="a" style="left:51px;top:769px;" width="16" height="16" viewBox="0 0 16 16"><path d="M1.5 6 V1.5 H14.5 V12.5 H8.5" fill="none" stroke="#c8c8c8" stroke-width="1"/><path d="M1.5 3 H14.5" fill="none" stroke="#c8c8c8" stroke-width="1.8"/><path d="M1.4 14.6 C1.4 11.4 3.4 10.2 7 10.2 M5 7.6 L7.6 10.2 L5 12.8" fill="none" stroke="#6cc3f5" stroke-width="1.6"/></svg><span class="a t" style="left:83.25px;top:768.5px;color:#fafafa;letter-spacing:0.078px;margin-left:-0.5px;">OpenFileDialog</span><svg class="a" style="left:51px;top:790px;" width="16" height="16" viewBox="0 0 16 16"><path d="M3.5 1.5 H10.5 L13.5 4.5 V14.5 H3.5 Z" fill="#262626" stroke="#c8c8c8"/><path d="M10.5 1.5 V4.5 H13.5 M6.5 1.5 V14.5 M3.5 11.5 H13.5" fill="none" stroke="#c8c8c8" stroke-width="1"/></svg><span class="a t" style="left:83.25px;top:789.5px;color:#fafafa;letter-spacing:0.052px;margin-left:-0.5px;">PageSetupDialog</span><svg class="a" style="left:51px;top:811px;" width="16" height="16" viewBox="0 0 16 16"><rect x="2.5" y="2.5" width="12" height="12" fill="none" stroke="#c8c8c8" stroke-width="1"/><rect x="4" y="4" width="1" height="1" fill="#c8c8c8"/><rect x="4" y="6" width="1" height="1" fill="#c8c8c8"/><rect x="4" y="8" width="1" height="1" fill="#c8c8c8"/><rect x="4" y="10" width="1" height="1" fill="#c8c8c8"/><rect x="4" y="12" width="1" height="1" fill="#c8c8c8"/><rect x="6" y="4" width="1" height="1" fill="#c8c8c8"/><rect x="6" y="6" width="1" height="1" fill="#c8c8c8"/><rect x="6" y="8" width="1" height="1" fill="#c8c8c8"/><rect x="6" y="10" width="1" height="1" fill="#c8c8c8"/><rect x="6" y="12" width="1" height="1" fill="#c8c8c8"/><rect x="8" y="4" width="1" height="1" fill="#c8c8c8"/><rect x="8" y="6" width="1" height="1" fill="#c8c8c8"/><rect x="8" y="8" width="1" height="1" fill="#c8c8c8"/><rect x="8" y="10" width="1" height="1" fill="#c8c8c8"/><rect x="8" y="12" width="1" height="1" fill="#c8c8c8"/><rect x="10" y="4" width="1" height="1" fill="#c8c8c8"/><rect x="10" y="6" width="1" height="1" fill="#c8c8c8"/><rect x="10" y="8" width="1" height="1" fill="#c8c8c8"/><rect x="10" y="10" width="1" height="1" fill="#c8c8c8"/><rect x="10" y="12" width="1" height="1" fill="#c8c8c8"/><rect x="12" y="4" width="1" height="1" fill="#c8c8c8"/><rect x="12" y="6" width="1" height="1" fill="#c8c8c8"/><rect x="12" y="8" width="1" height="1" fill="#c8c8c8"/><rect x="12" y="10" width="1" height="1" fill="#c8c8c8"/><rect x="12" y="12" width="1" height="1" fill="#c8c8c8"/></svg><span class="a t" style="left:83.25px;top:810.5px;color:#fafafa;letter-spacing:-0.331px;margin-left:-0.5px;">Panel</span><svg class="a" style="left:51px;top:832px;" width="16" height="16" viewBox="0 0 16 16"><rect x="1.5" y="1.5" width="13" height="13" fill="#262626" stroke="#c8c8c8"/><path d="M1 15 V10.6 L5 6.8 L8.4 10 L10.6 8.2 L15 12 V15 Z" fill="#6cc3f5"/><path d="M11.6 2.6 L12.3 4 L13.8 4.6 L12.3 5.2 L11.6 6.6 L10.9 5.2 L9.4 4.6 L10.9 4 Z" fill="#f0a030"/></svg><span class="a t" style="left:83.25px;top:831.5px;color:#fafafa;letter-spacing:-0.231px;margin-left:-0.5px;">PictureBox</span><svg class="a" style="left:51px;top:853px;" width="16" height="16" viewBox="0 0 16 16"><path d="M5.5 3.5 V1.5 H14.5 V9.5 H12.5" fill="none" stroke="#c8c8c8" stroke-width="1"/><path d="M5.5 2.6 H14.5" fill="none" stroke="#c8c8c8" stroke-width="1.4"/><rect x="1" y="8" width="10.6" height="5" rx="0.8" fill="#6cc3f5"/><rect x="3.2" y="5.6" width="6.2" height="3" fill="#1f1f1f" stroke="#6cc3f5" stroke-width="1.1"/><rect x="3.2" y="11.4" width="6.2" height="3.6" fill="#1f1f1f" stroke="#6cc3f5" stroke-width="1.1"/><rect x="2.4" y="9.6" width="1.6" height="1" fill="#1f1f1f"/></svg><span class="a t" style="left:83.25px;top:852.5px;color:#fafafa;letter-spacing:0.044px;margin-left:-0.5px;">PrintDialog</span><svg class="a" style="left:51px;top:874px;" width="16" height="16" viewBox="0 0 16 16"><path d="M7.5 4 V1.5 H12 L14.5 4 V10.5 H12.5" fill="none" stroke="#c8c8c8" stroke-width="1"/><rect x="1" y="8" width="10.6" height="5" rx="0.8" fill="#c8c8c8"/><rect x="3.2" y="5.6" width="6.2" height="3" fill="#1f1f1f" stroke="#c8c8c8" stroke-width="1.1"/><rect x="3.2" y="11.4" width="6.2" height="3.6" fill="#1f1f1f" stroke="#c8c8c8" stroke-width="1.1"/><rect x="2.4" y="9.6" width="1.6" height="1" fill="#1f1f1f"/></svg><span class="a t" style="left:83.25px;top:873.5px;color:#fafafa;letter-spacing:0.010px;margin-left:-0.5px;">PrintDocument</span><svg class="a" style="left:51px;top:895px;" width="16" height="16" viewBox="0 0 16 16"><path d="M4.5 7 V1.5 H11.5 L14.5 4.5 V14.5 H7" fill="#262626" stroke="#c8c8c8"/><path d="M11.5 1.5 V4.5 H14.5" fill="none" stroke="#c8c8c8" stroke-width="1"/><circle cx="6" cy="10.4" r="2.4" fill="#1f1f1f" stroke="#6cc3f5" stroke-width="1.4"/><path d="M4.2 12.2 L1.2 15.2" stroke="#6cc3f5" stroke-width="1.6"/></svg><span class="a t" style="left:83.25px;top:894.5px;color:#fafafa;letter-spacing:-0.136px;margin-left:-0.5px;">PrintPreviewControl</span><svg class="a" style="left:51px;top:916px;" width="16" height="16" viewBox="0 0 16 16"><path d="M5.5 3.5 V1.5 H14.5 V9.5 H12" fill="none" stroke="#c8c8c8" stroke-width="1"/><path d="M5.5 2.6 H14.5" fill="none" stroke="#c8c8c8" stroke-width="1.4"/><circle cx="8.2" cy="7.6" r="3.3" fill="#1f1f1f" stroke="#6cc3f5" stroke-width="1.5"/><path d="M5.8 10 L1.2 14.8" stroke="#6cc3f5" stroke-width="1.7"/></svg><span class="a t" style="left:83.25px;top:915.5px;color:#fafafa;letter-spacing:-0.105px;margin-left:-0.5px;">PrintPreviewDialog</span><svg class="a" style="left:51px;top:937px;" width="16" height="16" viewBox="0 0 16 16"><circle cx="11.4" cy="4.6" r="1.9" fill="none" stroke="#c8c8c8" stroke-width="1.2"/><circle cx="11.4" cy="4.6" r="3.2" fill="none" stroke="#c8c8c8" stroke-width="1.5" stroke-dasharray="1.26 1.25"/><circle cx="5" cy="11" r="1.9" fill="none" stroke="#c8c8c8" stroke-width="1.2"/><circle cx="5" cy="11" r="3.2" fill="none" stroke="#c8c8c8" stroke-width="1.5" stroke-dasharray="1.26 1.25"/></svg><span class="a t" style="left:83.25px;top:936.5px;color:#fafafa;letter-spacing:-0.613px;margin-left:-0.5px;">Process</span><svg class="a" style="left:51px;top:958px;" width="16" height="16" viewBox="0 0 16 16"><rect x="1.5" y="4.5" width="13.5" height="7" rx="0.6" fill="none" stroke="#c8c8c8" stroke-width="1.1"/><rect x="3.4" y="6.4" width="6" height="3.2" fill="#6cc3f5"/></svg><span class="a t" style="left:83.25px;top:957.5px;color:#fafafa;letter-spacing:-0.406px;margin-left:-0.5px;">ProgressBar</span><svg class="a" style="left:51px;top:979px;" width="16" height="16" viewBox="0 0 16 16"><path d="M8.6 6.8 L2.2 13.6" stroke="#c8c8c8" stroke-width="3" stroke-linecap="round"/><path d="M11.6 0.8 C8.4 0.4 6.4 3.4 7.6 6 L10 8.6 C12.8 9.4 15.4 7.4 15 4.4 L12.6 6.8 L10.2 6 L9.4 3.4 Z" fill="#c8c8c8"/></svg><span class="a t" style="left:83.25px;top:978.5px;color:#fafafa;letter-spacing:-0.052px;margin-left:-0.5px;">PropertyGrid</span><svg class="a" style="left:51px;top:1000px;" width="16" height="16" viewBox="0 0 16 16"><circle cx="8" cy="8.6" r="6.2" fill="none" stroke="#c8c8c8" stroke-width="1.5"/><circle cx="8" cy="8.6" r="2" fill="#c8c8c8"/></svg><span class="a t" style="left:83.25px;top:999.5px;color:#fafafa;letter-spacing:0.041px;margin-left:-0.5px;">RadioButton</span></div>
<div class="a" style="left:236px;top:93px;width:1134px;height:720px;background:#1c1c1c;border:1px solid #3d3d3d;border-top:none"></div>
<div class="a" style="left:237px;top:72px;width:140px;height:19px;background:#3d3d3d;"></div>
<div class="a" style="left:237px;top:72px;width:140px;height:2px;background:#7160e8;"></div>
<div class="a" style="left:237px;top:91px;width:1132px;height:2px;background:#7160e8;"></div>
<span class="a t" style="left:241.5px;top:74.5px;color:#ffffff;letter-spacing:0.028px;margin-left:-0.5px;">Form1.cs [<span class="c">設計</span>]*</span>
<svg class="a" style="left:344px;top:78px;" width="9" height="9" viewBox="0 0 9 9"><path d="M0 4.5 H3.5 M3.5 1 V8 M3.5 2.5 H8.5 V6.5 H3.5" fill="none" stroke="#e0e0e0" stroke-width="1.1"/><rect x="3.5" y="5" width="5" height="1.6" fill="#e0e0e0"/></svg>
<svg class="a" style="left:362px;top:78px;" width="10" height="10" viewBox="0 0 10 10"><path d="M0.8 0.8 L9.2 9.2 M9.2 0.8 L0.8 9.2" stroke="#e0e0e0" stroke-width="1.4"/></svg>
<svg class="a" style="left:1341px;top:81px;" width="8" height="4.4" viewBox="0 0 8 4.4"><path d="M0 0 H8 L4 4.4 Z" fill="#e0e0e0"/></svg>
<svg class="a" style="left:1358px;top:76px;" width="10" height="10" viewBox="0 0 10 10"><circle cx="5" cy="5" r="3.3" fill="#e8e8e8"/><circle cx="5" cy="5" r="4.1" fill="none" stroke="#e8e8e8" stroke-width="1.9" stroke-dasharray="1.61 1.61" stroke-dashoffset="0.8"/><circle cx="5" cy="5" r="1.5" fill="#1f1f1f"/></svg>

<div class="a" style="left:252px;top:139px;width:816px;height:458px;background:#000"></div>
<div class="a" style="left:253px;top:109px;width:814px;height:487px;border-radius:7px 7px 0 0;background:linear-gradient(#99b4d1 0px,#a6c0de 14px,#b9d1ea 30px,#b9d1ea 100%);box-shadow:inset 1px 1px 0 #fff, inset -1px -1px 0 #55d6f2"></div>
<div class="a" style="left:260px;top:139px;width:800px;height:450px;background:#f0f0f0"></div>
<div class="a" style="left:260px;top:139px;width:800px;height:24px;background:linear-gradient(90deg,#f0f0f0 0,#f4f4f4 30%,#fcfcfc 100%)"></div>

<svg class="a" style="left:263px;top:120px;" width="15" height="14" viewBox="0 0 15 14"><rect x="0.5" y="4.5" width="5" height="7" fill="#3a3a3a" stroke="#f4f4f4"/><rect x="4.5" y="0.5" width="9" height="8" fill="#3a3a3a" stroke="#f4f4f4"/><rect x="5.5" y="8.5" width="6" height="4" fill="#3a3a3a" stroke="#f4f4f4"/></svg>
<span class="a t" style="left:282.5px;top:119.5px;color:#000000;letter-spacing:-0.471px;margin-left:-0.5px;">Form1</span>
<div class="a" style="left:958px;top:118px;width:32px;height:18px;background:linear-gradient(#c6d8ee 0,#bcd0e8 48%,#9bb4d2 52%,#b4cae4 100%);border:1px solid #5b6b84;border-radius:3px;box-shadow:inset 0 0 0 1px rgba(255,255,255,0.55)"></div>
<div class="a" style="left:992px;top:118px;width:32px;height:18px;background:linear-gradient(#c6d8ee 0,#bcd0e8 48%,#9bb4d2 52%,#b4cae4 100%);border:1px solid #5b6b84;border-radius:3px;box-shadow:inset 0 0 0 1px rgba(255,255,255,0.55)"></div>
<div class="a" style="left:1026px;top:118px;width:32px;height:18px;background:linear-gradient(#e9b1a2 0,#d98a78 48%,#c23d22 52%,#d2634a 100%);border:1px solid #5a1c22;border-radius:3px;box-shadow:inset 0 0 0 1px rgba(255,255,255,0.55)"></div>
<svg class="a" style="left:968px;top:126px;" width="11" height="6" viewBox="0 0 11 6"><rect x="0.5" y="0.5" width="10" height="4" rx="1" fill="#f0f0f0" stroke="#4a4a5a"/></svg>
<svg class="a" style="left:1002px;top:122px;" width="11" height="9" viewBox="0 0 11 9"><rect x="0.5" y="0.5" width="10" height="8" rx="1" fill="#f0f0f0" stroke="#4a4a5a"/><rect x="3.2" y="3.4" width="4.6" height="2.2" fill="#8ea6c6" stroke="#4a4a5a" stroke-width="0.8"/></svg>
<svg class="a" style="left:1036px;top:122px;" width="11" height="9" viewBox="0 0 11 9"><path d="M1 0.8 L10 8.2 M10 0.8 L1 8.2" stroke="#5a3a3a" stroke-width="3.6"/><path d="M1.4 1.2 L9.6 7.8 M9.6 1.2 L1.4 7.8" stroke="#f4f4f4" stroke-width="2.1"/></svg>
<span class="a t" style="left:275px;top:142.5px;color:#000;letter-spacing:-0.288px;margin-left:-0.5px;">File</span>
<span class="a t" style="left:313px;top:142.5px;color:#000;letter-spacing:0.005px;margin-left:-0.5px;">View</span>
<div class="a" style="left:351px;top:142px;width:117px;height:17px;background:#ffffff;border:1px solid #9a9a9a;"></div>
<span class="a t" style="left:351px;top:142.5px;color:#b4b4b4;width:117px;text-align:center"><span class="c">在這裡輸入</span></span>
<div class="a" style="left:257px;top:136px;width:806px;height:30px;border:1px dotted #3c3c3c;"></div>
<div class="a" style="left:255px;top:134px;width:5px;height:5px;background:#ffffff;border:1px solid #000;"></div>
<div class="a" style="left:1045.5px;top:131.5px;width:9px;height:9px;background:#ffffff;border:1px solid #8a8470;border-radius:1px"></div>
<svg class="a" style="left:1048px;top:133.5px;" width="4" height="6" viewBox="0 0 4 6"><path d="M0 0 V6 L4 3 Z" fill="#000"/></svg>
<div class="a" style="left:237px;top:725px;width:1132px;height:7px;background:#000000;"></div>
<div class="a" style="left:237px;top:732px;width:1132px;height:80px;background:#1c1c1c;"></div>
<div class="a" style="left:251px;top:746px;width:108px;height:27px;border:1px dotted #9a9a9a;"></div>
<div class="a" style="left:249.5px;top:744px;width:4px;height:4px;background:#ffffff;"></div>
<svg class="a" style="left:260px;top:751px;" width="16" height="16" viewBox="0 0 16 16"><path d="M1 15 V1 H8.5 V4 H15 V15 Z" fill="#1f1f1f" stroke="#f0f0f0" stroke-width="1.4"/><path d="M3.6 3.6 H6.4 M3.6 6.4 H12.4 M3.6 12.6 H10.4" stroke="#c8c8c8" stroke-width="1"/><rect x="1.6" y="8" width="12.8" height="3" fill="#2f9be0"/><rect x="3.6" y="9" width="8.8" height="1" fill="#bfe2fb"/></svg>
<span class="a t" style="left:279.2px;top:753px;color:#fafafa;letter-spacing:0.021px;margin-left:-0.5px;">menuStrip1</span>
<svg class="a" style="left:0;top:0" width="1920" height="1040" viewBox="0 0 1920 1040"><path d="M32.6 688 L36.8 697.6 L44.4 675" fill="none" stroke="#ff0a0a" stroke-width="1.8" stroke-linecap="round" stroke-linejoin="round"/><path d="M152.5 699.8 C160 698.6 168 697.6 174 698.4 C180 699.6 184 703 188 706 C194 710 198 712.5 202.5 715.6 C207 719 210 719.6 214 721.4 C217.6 724 219 727.6 221.7 731 C225 735 228 738 231.3 741.5 C234 745 236 749 238 753 C240.6 757.4 243.6 761.6 246.7 765.6" fill="none" stroke="#ff0a0a" stroke-width="3" stroke-linecap="round"/><path d="M238.2 729.6 C237.6 735 237 740 236.2 745.4 C237.4 750 240 756 243 761" fill="none" stroke="#ff0a0a" stroke-width="2" stroke-linecap="round"/><path d="M228.6 747.4 C232 751 236 755.6 240 759.8 L246.4 765.4" fill="none" stroke="#ff0a0a" stroke-width="2.2" stroke-linecap="round"/></svg>
<div class="a" style="left:236px;top:820px;width:1134px;height:171px;border:1px solid #3d3d3d;"></div>
<span class="a t" style="left:241.5px;top:823px;color:#d0d0d0;"><span class="c">輸出</span></span>
<svg class="a" style="left:1321px;top:828.5px;" width="8" height="4" viewBox="0 0 8 4"><path d="M0 0 H8 L4 4 Z" fill="#e0e0e0"/></svg>
<svg class="a" style="left:1337.5px;top:824.5px;" width="8" height="12" viewBox="0 0 8 12"><path d="M2 0.6 H6 M2.3 0.6 V6 M5.4 0.6 V6 M0.5 6.5 H7.5 M4 6.5 V11.5" fill="none" stroke="#e0e0e0" stroke-width="1.1"/><rect x="4.4" y="1" width="1.4" height="5" fill="#e0e0e0"/></svg>
<svg class="a" style="left:1353px;top:826px;" width="10" height="9" viewBox="0 0 10 9"><path d="M0.8 0.9 L9.2 8.1 M9.2 0.9 L0.8 8.1" stroke="#e0e0e0" stroke-width="1.35"/></svg>
<span class="a t" style="left:244.2px;top:846.5px;color:#f0f0f0;font-size:12px;letter-spacing:-0.126px;margin-left:-0.5px;"><span class="c">顯示輸出來源</span>(S):</span>
<div class="a" style="left:343px;top:844px;width:300px;height:20px;background:#383838;border:1px solid #424242;"></div>
<svg class="a" style="left:633px;top:853px;" width="6" height="3" viewBox="0 0 6 3"><path d="M0 0 H6 L3 3 Z" fill="#d8d8d8"/></svg>
<div class="a" style="left:649px;top:845px;width:1px;height:19px;background:#424242;"></div>
<div class="a" style="left:679px;top:845px;width:1px;height:19px;background:#424242;"></div>
<div class="a" style="left:731px;top:845px;width:1px;height:19px;background:#424242;"></div>
<div class="a" style="left:761px;top:845px;width:1px;height:19px;background:#424242;"></div>
<svg class="a" style="left:657px;top:846px;" width="16" height="16" viewBox="0 0 16 16"><path d="M8.5 4.8 V2.6 C8.5 0.4 4.8 0.4 4.8 2.6 V9 M2.6 6.8 L4.8 9.2 L7 6.8" fill="none" stroke="#4a4a4a"/><path d="M5.5 9.5 H15 M1 14.5 H15" stroke="#4a4a4a"/><path d="M1 12 H11" stroke="#4a4a4a" stroke-width="2"/></svg>
<svg class="a" style="left:687px;top:846px;" width="15" height="16" viewBox="0 0 15 16"><path d="M0.5 4.5 H8 M3 2 L0.5 4.5 L3 7" fill="none" stroke="#4a4a4a"/><path d="M3 9.5 H14 M3 14.5 H14" stroke="#4a4a4a"/><path d="M3 12 H14" stroke="#4a4a4a" stroke-width="2"/></svg>
<svg class="a" style="left:709px;top:846px;" width="15" height="16" viewBox="0 0 15 16"><path d="M0 4.5 H7.5 M5 2 L7.5 4.5 L5 7" fill="none" stroke="#4a4a4a"/><path d="M2 9.5 H13 M2 14.5 H13" stroke="#4a4a4a"/><path d="M2 12 H13" stroke="#4a4a4a" stroke-width="2"/></svg>
<svg class="a" style="left:740px;top:846px;" width="15" height="16" viewBox="0 0 15 16"><path d="M0.5 1.5 L5.5 7 M5.5 1.5 L0.5 7" stroke="#4a4a4a"/><path d="M7.5 1.5 H14.5 M7.5 4.5 H14.5 M7.5 7.5 H14.5 M0 10.5 H14.5 M0 13.5 H14.5" stroke="#4a4a4a"/></svg>
<svg class="a" style="left:770px;top:846px;" width="15" height="16" viewBox="0 0 15 16"><text x="-0.3" y="6.6" font-size="8" font-weight="bold" fill="#e8e8e8" font-family="Liberation Sans,sans-serif">ab</text><text x="-0.3" y="13.2" font-size="8" font-weight="bold" fill="#e8e8e8" font-family="Liberation Sans,sans-serif">c</text><path d="M9.6 5.5 H14 V11 H6.2 M8.6 8.6 L6 11 L8.6 13.4" fill="none" stroke="#55aaff" stroke-width="1.2"/></svg>
<span class="a t" style="left:242px;top:991.5px;color:#c8c8c8;"><span class="c">錯誤清單</span>...</span>
<div class="a" style="left:305px;top:990px;width:36px;height:21px;background:#1f1f1f;border:1px solid #3d3d3d;border-top:1px solid #1f1f1f"></div>
<span class="a t" style="left:311.5px;top:991.5px;color:#fafafa;"><span class="c">輸出</span></span>
<div class="a" style="left:1914px;top:72px;width:6px;height:24px;background:#383838;"></div>
<span class="a t" style="left:1896px;top:72px;width:12px;height:24px;line-height:12px;font-size:12px;font-weight:300;color:#b0b0b0;writing-mode:vertical-rl;text-orientation:upright;white-space:nowrap">通知</span>
<div class="a" style="left:1376px;top:72px;width:513px;height:522px;border:1px solid #3d3d3d;"></div>
<span class="a t" style="left:1381.5px;top:75.5px;color:#d0d0d0;"><span class="c">方案總管</span></span>
<svg class="a" style="left:1840px;top:81.5px;" width="8" height="4" viewBox="0 0 8 4"><path d="M0 0 H8 L4 4 Z" fill="#e0e0e0"/></svg>
<svg class="a" style="left:1856.5px;top:77.5px;" width="8" height="12" viewBox="0 0 8 12"><path d="M2 0.6 H6 M2.3 0.6 V6 M5.4 0.6 V6 M0.5 6.5 H7.5 M4 6.5 V11.5" fill="none" stroke="#e0e0e0" stroke-width="1.1"/><rect x="4.4" y="1" width="1.4" height="5" fill="#e0e0e0"/></svg>
<svg class="a" style="left:1872px;top:79px;" width="10" height="9" viewBox="0 0 10 9"><path d="M0.8 0.9 L9.2 8.1 M9.2 0.9 L0.8 8.1" stroke="#e0e0e0" stroke-width="1.35"/></svg>
<svg class="a" style="left:1384.5px;top:100.5px;" width="14" height="14" viewBox="0 0 14 14"><circle cx="7" cy="7" r="6.3" fill="none" stroke="#4a4a4a"/><path d="M10.5 7 H3.8 M6.3 4.3 L3.6 7 L6.3 9.7" fill="none" stroke="#4a4a4a"/></svg>
<svg class="a" style="left:1406.5px;top:100.5px;" width="14" height="14" viewBox="0 0 14 14"><circle cx="7" cy="7" r="6.3" fill="none" stroke="#4a4a4a"/><path d="M3.5 7 H10.2 M7.7 4.3 L10.4 7 L7.7 9.7" fill="none" stroke="#4a4a4a"/></svg>
<svg class="a" style="left:1429px;top:101px;" width="15" height="14" viewBox="0 0 15 14"><path d="M0.8 7.4 L7.4 1 L14 7.4 M2.6 6.4 V13.2 H5.8 V8.6 H9 V13.2 H12.2 V6.4" fill="none" stroke="#e0e0e0" stroke-width="1.2" stroke-linejoin="round"/></svg>
<svg class="a" style="left:1449px;top:100px;" width="16" height="16" viewBox="0 0 16 16"><rect x="7.5" y="0.8" width="8" height="10" fill="#1f1f1f" stroke="#e0e0e0"/><path d="M9.5 3.5 H13.5 M9.5 5.8 H13.5 M9.5 8 H13.5" stroke="#e0e0e0" stroke-width="1.1"/><path d="M7.2 6.4 L9 7.2 V14.4 L7.2 15.2 L2.6 11.2 L1.2 12.4 L0.4 12 V9.6 L1.2 9.2 L2.6 10.4 Z M7.2 8.8 L4.6 10.8 L7.2 12.8 Z" fill="#a672e8" stroke="#1f1f1f" stroke-width="0.5" fill-rule="evenodd"/></svg>
<div class="a" style="left:1472px;top:98px;width:1px;height:20px;background:#424242;"></div>
<svg class="a" style="left:1481px;top:99px;" width="16" height="17" viewBox="0 0 16 17"><path d="M0 0.5 H5.6 L2.8 4 Z" fill="#55aaff"/><circle cx="8.6" cy="10.2" r="5.4" fill="#1f1f1f" stroke="#e0e0e0" stroke-width="1.2"/><path d="M8.6 7 V10.6 H11.4" fill="none" stroke="#e0e0e0" stroke-width="1.1"/></svg>
<svg class="a" style="left:1503px;top:107px;" width="7" height="4" viewBox="0 0 7 4"><path d="M0 0 H7 L3.5 3.5 Z" fill="#d0d0d0"/></svg>
<svg class="a" style="left:1516.5px;top:103px;" width="14" height="11" viewBox="0 0 14 11"><path d="M13 3 H1 M4 0.4 L1 3 M13.4 7.6 H1.4 M10.4 10.4 L13.4 7.6" fill="none" stroke="#e0e0e0" stroke-width="1.2"/></svg>
<svg class="a" style="left:1537.5px;top:100px;" width="16" height="16" viewBox="0 0 16 16"><path d="M3 2.5 V0.7 H15.2 V12.6 H13.4" fill="none" stroke="#e0e0e0" stroke-width="1.1"/><rect x="0.7" y="2.8" width="12.4" height="12.2" fill="#1f1f1f" stroke="#e0e0e0" stroke-width="1.2"/><path d="M3.6 9 H10.2" stroke="#e0e0e0" stroke-width="1.2"/></svg>
<svg class="a" style="left:1559.5px;top:100.5px;" width="15" height="15" viewBox="0 0 15 15"><rect x="4.6" y="0.7" width="9.6" height="10" fill="none" stroke="#e0e0e0" stroke-width="1.2"/><rect x="0.7" y="4.4" width="9.6" height="10" fill="#1f1f1f" stroke="#e0e0e0" stroke-width="1.2"/><path d="M4.6 4.6 V10.7 H10.2" fill="none" stroke="#6a6a6a" stroke-width="0.9"/></svg>
<div class="a" style="left:1581px;top:98px;width:1px;height:20px;background:#424242;"></div>
<div class="a" style="left:1587px;top:97px;width:22px;height:22px;background:#1a1a1a;border:1px solid #7160e8;"></div>
<svg class="a" style="left:1590.5px;top:100.5px;" width="15" height="15" viewBox="0 0 15 15"><path d="M2.4 3.5 V7.6 H8 V12" fill="none" stroke="#e0e0e0" stroke-width="1.1"/><rect x="0.8" y="0.8" width="3.2" height="3.2" fill="#1a1a1a" stroke="#e0e0e0" stroke-width="1.1"/><rect x="6" y="5.6" width="3.6" height="3.6" fill="#1a1a1a" stroke="#e0e0e0" stroke-width="1.1"/><rect x="10.2" y="10.4" width="4" height="4" fill="#1a1a1a" stroke="#e0e0e0" stroke-width="1.1"/><path d="M8 12.4 H10" stroke="#e0e0e0" stroke-width="1.1"/></svg>
<svg class="a" style="left:1612px;top:107px;" width="7" height="4" viewBox="0 0 7 4"><path d="M0 0 H7 L3.5 3.5 Z" fill="#d0d0d0"/></svg>
<div class="a" style="left:1624px;top:98px;width:1px;height:20px;background:#424242;"></div>
<svg class="a" style="left:1632.5px;top:100.5px;" width="15" height="15" viewBox="0 0 15 15"><path d="M10.4 0.8 C8 0.7 6.4 2.6 7 5.2 L1.2 11.6 C0.2 12.8 2 14.8 3.2 13.8 L9.6 8 C12.2 8.6 14.4 6.8 14.2 4.4 L12 6.6 L9.6 5.8 L8.8 3.4 Z" fill="none" stroke="#e0e0e0" stroke-width="1.2" stroke-linejoin="round"/></svg>
<div class="a" style="left:1651px;top:97px;width:22px;height:22px;background:#1a1a1a;border:1px solid #7160e8;"></div>
<svg class="a" style="left:1654px;top:101px;" width="17" height="13" viewBox="0 0 17 13"><path d="M0.5 10.5 H12 M2.5 10.5 V7.5 H10 V10.5" fill="none" stroke="#e0e0e0" stroke-width="1.2"/><path d="M11.6 2.6 L10.4 1.2 M13.2 4.2 H15 M12.6 7.6 L14 8.8" stroke="#e8d28a" stroke-width="1.1"/><rect x="12.4" y="1.4" width="1.2" height="1.2" fill="#e8d28a"/></svg>
<div class="a" style="left:1377px;top:122px;width:511px;height:21px;background:#383838;border:1px solid #424242;"></div>
<span class="a t" style="left:1382.5px;top:124.5px;color:#d0d0d0;font-size:12px;letter-spacing:0.076px;margin-left:-0.5px;"><span class="c">搜尋方案總管</span> (Ctrl+;)</span>
<svg class="a" style="left:1859.5px;top:125.5px;" width="14" height="14" viewBox="0 0 14 14"><circle cx="8.8" cy="5.2" r="3.7" fill="none" stroke="#d8d8d8" stroke-width="1.7"/><path d="M6.2 7.8 L1.3 12.7" stroke="#d8d8d8" stroke-width="2.5" stroke-linecap="round"/></svg>
<svg class="a" style="left:1878px;top:131px;" width="6" height="3" viewBox="0 0 6 3"><path d="M0 0 H6 L3 3 Z" fill="#d0d0d0"/></svg>
<div class="a" style="left:1377px;top:164px;width:511px;height:19px;background:#3d3d3d;"></div>
<svg class="a" style="left:1392px;top:148px;" width="15" height="14" viewBox="0 0 15 14"><path d="M4.4 11.6 H0.6 V0.6 H13.6 V6.4" fill="none" stroke="#e0e0e0" stroke-width="1.2"/><path d="M0.6 3.4 H13.6" stroke="#e0e0e0" stroke-width="1.2"/><path d="M12.2 5.4 L14.4 6.4 V13 L12.2 14 L7.8 10.4 L6.2 11.6 L5.2 11.2 V8.2 L6.2 7.8 L7.8 9 Z M12.2 7.8 L9.6 9.7 L12.2 11.6 Z" fill="#a672e8" fill-rule="evenodd"/></svg>
<span class="a t" style="left:1412.5px;top:146.5px;color:#fafafa;letter-spacing:-0.074px;margin-left:-0.5px;"><span class="c">方案</span> &#x27;EmguCV2022Net6&#x27; (1 / 1 <span class="c">個專案</span>)</span>
<svg class="a" style="left:1387.5px;top:171px;" width="7" height="7" viewBox="0 0 7 7"><path d="M6.5 0.5 V6.5 H0.5 Z" fill="#e0e0e0"/></svg>
<svg class="a" style="left:1409.5px;top:167.5px;" width="15" height="13" viewBox="0 0 15 13"><rect x="0.6" y="0.6" width="13.8" height="11.8" fill="#1f1f1f" stroke="#e0e0e0" stroke-width="1.1"/><path d="M6.6 4.2 C4.4 3 2.8 4.4 2.8 6.5 C2.8 8.6 4.4 10 6.6 8.8" fill="none" stroke="#8ade8a" stroke-width="1.3"/><path d="M8.8 4 V9 M10.8 4 V9 M7.8 5.6 H11.8 M7.8 7.6 H11.8" stroke="#8ade8a" stroke-width="1"/></svg>
<span class="a t" style="left:1430.3px;top:165.5px;color:#fafafa;letter-spacing:0.281px;margin-left:-0.5px;">LoadImageDemo</span>
<svg class="a" style="left:1405.5px;top:187px;" width="6" height="11" viewBox="0 0 6 11"><path d="M0.6 0.8 V10.2 L5.2 5.5 Z" fill="none" stroke="#e0e0e0" stroke-width="1.1" stroke-linejoin="round"/></svg>
<svg class="a" style="left:1426.5px;top:187px;" width="17" height="11" viewBox="0 0 17 11"><rect x="0.6" y="4.6" width="3.4" height="3.4" fill="none" stroke="#e0e0e0" stroke-width="1.1"/><path d="M4 6.3 H9" stroke="#e0e0e0" stroke-width="1.1"/><rect x="4.4" y="0.6" width="4" height="3.6" fill="none" stroke="#e0e0e0" stroke-width="1.1"/><rect x="9.2" y="4.6" width="5" height="5.4" fill="#1f1f1f" stroke="#e0e0e0" stroke-width="1.1"/><path d="M11.2 4.4 V2 H16 V7.6 H14.4" fill="none" stroke="#e0e0e0" stroke-width="1.1"/></svg>
<span class="a t" style="left:1448.5px;top:184.5px;color:#fafafa;"><span class="c">相依性</span></span>
<svg class="a" style="left:1405.5px;top:209px;" width="7" height="7" viewBox="0 0 7 7"><path d="M6.5 0.5 V6.5 H0.5 Z" fill="#e0e0e0"/></svg>
<svg class="a" style="left:1427.5px;top:205px;" width="15" height="13" viewBox="0 0 15 13"><rect x="0.6" y="0.6" width="13.6" height="11.8" fill="none" stroke="#e0e0e0" stroke-width="1.1"/><path d="M0.6 3.4 H14.2" stroke="#e0e0e0" stroke-width="1.1"/><rect x="3" y="7" width="3.4" height="3" fill="none" stroke="#b48cf0" stroke-width="1.1"/><rect x="8.4" y="5.6" width="3.4" height="3" fill="none" stroke="#b48cf0" stroke-width="1.1"/></svg>
<span class="a t" style="left:1448.5px;top:203.5px;color:#fafafa;letter-spacing:-0.384px;margin-left:-0.5px;">Form1.cs</span>
<svg class="a" style="left:1423.5px;top:225px;" width="6" height="11" viewBox="0 0 6 11"><path d="M0.6 0.8 V10.2 L5.2 5.5 Z" fill="none" stroke="#e0e0e0" stroke-width="1.1" stroke-linejoin="round"/></svg>
<svg class="a" style="left:1445.5px;top:226px;" width="15" height="10" viewBox="0 0 15 10"><path d="M6.2 1.6 C3.2 0 0.9 2 0.9 4.8 C0.9 7.6 3.2 9.6 6.2 8" fill="none" stroke="#8ade8a" stroke-width="1.6"/><path d="M9.6 1 V8.6 M12.4 1 V8.6 M7.8 3.3 H14.2 M7.8 6.3 H14.2" stroke="#8ade8a" stroke-width="1.3"/></svg>
<span class="a t" style="left:1466.3px;top:222.5px;color:#fafafa;letter-spacing:-0.186px;margin-left:-0.5px;">Form1.Designer.cs</span>
<svg class="a" style="left:1446.5px;top:243px;" width="12" height="14" viewBox="0 0 12 14"><path d="M3.4 3.4 V0.6 H8 L11 3.6 V10.6 H8.2" fill="none" stroke="#e0e0e0" stroke-width="1.1"/><path d="M0.6 3.6 H5.2 L8 6.4 V13.4 H0.6 Z" fill="#2a2a2a" stroke="#e0e0e0" stroke-width="1.1"/></svg>
<span class="a t" style="left:1466.3px;top:241.5px;color:#fafafa;letter-spacing:-0.286px;margin-left:-0.5px;">Form1.resx</span>
<svg class="a" style="left:1405.5px;top:263px;" width="6" height="11" viewBox="0 0 6 11"><path d="M0.6 0.8 V10.2 L5.2 5.5 Z" fill="none" stroke="#e0e0e0" stroke-width="1.1" stroke-linejoin="round"/></svg>
<svg class="a" style="left:1427.5px;top:264px;" width="15" height="10" viewBox="0 0 15 10"><path d="M6.2 1.6 C3.2 0 0.9 2 0.9 4.8 C0.9 7.6 3.2 9.6 6.2 8" fill="none" stroke="#8ade8a" stroke-width="1.6"/><path d="M9.6 1 V8.6 M12.4 1 V8.6 M7.8 3.3 H14.2 M7.8 6.3 H14.2" stroke="#8ade8a" stroke-width="1.3"/></svg>
<span class="a t" style="left:1448.5px;top:260.5px;color:#fafafa;letter-spacing:-0.208px;margin-left:-0.5px;">Program.cs</span>
<div class="a" style="left:1376px;top:593px;width:60px;height:21px;background:#1f1f1f;border:1px solid #3d3d3d;border-top:1px solid #1f1f1f"></div>
<span class="a t" style="left:1382px;top:595px;color:#fafafa;"><span class="c">方案總管</span></span>
<span class="a t" style="left:1442.3px;top:595px;color:#c8c8c8;letter-spacing:-0.128px;margin-left:-0.5px;">Git <span class="c">變更</span></span>
<span class="a t" style="left:1497px;top:595px;color:#c8c8c8;letter-spacing:0.039px;margin-left:-0.5px;">Team Explorer</span>
<div class="a" style="left:1376px;top:620px;width:513px;height:391px;border:1px solid #3d3d3d;"></div>
<span class="a t" style="left:1381.5px;top:623.5px;color:#d0d0d0;"><span class="c">屬性</span></span>
<svg class="a" style="left:1840px;top:629px;" width="8" height="4" viewBox="0 0 8 4"><path d="M0 0 H8 L4 4 Z" fill="#e0e0e0"/></svg>
<svg class="a" style="left:1856.5px;top:625px;" width="8" height="12" viewBox="0 0 8 12"><path d="M2 0.6 H6 M2.3 0.6 V6 M5.4 0.6 V6 M0.5 6.5 H7.5 M4 6.5 V11.5" fill="none" stroke="#e0e0e0" stroke-width="1.1"/><rect x="4.4" y="1" width="1.4" height="5" fill="#e0e0e0"/></svg>
<svg class="a" style="left:1872px;top:626.5px;" width="10" height="9" viewBox="0 0 10 9"><path d="M0.8 0.9 L9.2 8.1 M9.2 0.9 L0.8 8.1" stroke="#e0e0e0" stroke-width="1.35"/></svg>
<div class="a" style="left:1377px;top:642px;width:510px;height:24px;background:#383838;"></div>
<span class="a t" style="left:1383.5px;top:646px;color:#ffffff;letter-spacing:0.291px;margin-left:-0.5px;-webkit-text-stroke:0.45px #ffffff;">menuStrip1</span>
<span class="a t" style="left:1458.5px;top:646px;color:#fafafa;letter-spacing:-0.151px;margin-left:-0.5px;">System.Windows.Forms.MenuStrip</span>
<svg class="a" style="left:1878.5px;top:653px;" width="6" height="3" viewBox="0 0 6 3"><path d="M0 0 H6 L3 3 Z" fill="#d8d8d8"/></svg>
<div class="a" style="left:1380px;top:668px;width:23px;height:22px;background:#1a1a1a;border:1px solid #7160e8;"></div>
<svg class="a" style="left:1383.5px;top:671.5px;" width="16" height="16" viewBox="0 0 16 16"><rect x="0.8" y="0.8" width="4.4" height="4.4" fill="none" stroke="#e0e0e0" stroke-width="1.1"/><path d="M1.8 3 H4.2 M3 1.8 V4.2" stroke="#e0e0e0" stroke-width="0.9"/><rect x="0.8" y="9.4" width="4.4" height="4.4" fill="none" stroke="#e0e0e0" stroke-width="1.1"/><path d="M1.8 11.6 H4.2 M3 10.4 V12.8" stroke="#e0e0e0" stroke-width="0.9"/><path d="M7 1.5 H12.5 M7 4 H12.5 M7 6.5 H12.5 M7 10 H12.5 M7 12.5 H12.5 M14 4 H15 M14 6.5 H15 M14 10 H15 M14 12.5 H15" stroke="#e0e0e0" stroke-width="1.1"/></svg>
<svg class="a" style="left:1406.5px;top:672px;" width="16" height="15" viewBox="0 0 16 15"><text x="0" y="6.2" font-size="7.2" font-weight="bold" fill="#e0e0e0" font-family="Liberation Sans,sans-serif">A</text><text x="0" y="14" font-size="7.2" font-weight="bold" fill="#e0e0e0" font-family="Liberation Sans,sans-serif">Z</text><path d="M11.4 2.6 V11.4 M8.4 8.6 L11.4 11.8 L14.4 8.6" fill="none" stroke="#55b8f5" stroke-width="1.7"/></svg>
<div class="a" style="left:1429px;top:670px;width:1px;height:19px;background:#424242;"></div>
<div class="a" style="left:1432px;top:668px;width:23px;height:22px;background:#1a1a1a;border:1px solid #7160e8;"></div>
<svg class="a" style="left:1435.5px;top:671px;" width="16" height="16" viewBox="0 0 16 16"><path d="M5.4 2 V0.8 H11 L14.4 4.2 V14.6 H6.6" fill="none" stroke="#e0e0e0" stroke-width="1.1"/><path d="M11 0.8 V4.2 H14.4" fill="none" stroke="#e0e0e0" stroke-width="0.9"/><path d="M2.4 3.4 C0.6 4.2 0.6 7 2.6 7.8 V13.6 C2.6 14.8 4.6 14.8 4.6 13.6 V7.8 C6.6 7 6.6 4.2 4.8 3.4 V6 H2.4 Z" fill="#e0e0e0"/></svg>
<svg class="a" style="left:1459px;top:671px;" width="14" height="17" viewBox="0 0 14 17"><path d="M6 0.8 H12.6 L8.6 6.4 H12.2 L2.2 16 L5.2 9 H1.6 Z" fill="#f0b070" stroke="#f4f4f4" stroke-width="1" stroke-linejoin="round"/></svg>
<div class="a" style="left:1481px;top:670px;width:1px;height:19px;background:#424242;"></div>
<svg class="a" style="left:1487px;top:671px;" width="17" height="16" viewBox="0 0 17 16"><path d="M11.6 0.6 C8.8 0.6 7 3 7.8 5.6 L0.8 12.4 V14.8 H3.6 L5 13.4 V12 H6.4 L9.6 8.6 C12.6 9.6 15.6 7.6 15.6 4.6 C15.6 2.2 13.8 0.6 11.6 0.6 Z" fill="#7a7a7a"/><circle cx="12" cy="4" r="1.5" fill="#5a5a5a"/></svg>
<div class="a" style="left:1377px;top:693px;width:493px;height:254px;background:#1f1f1f;"></div>
<div class="a" style="left:1377px;top:693px;width:15px;height:254px;background:#2e2e2e;"></div>
<div class="a" style="left:1392px;top:693px;width:478px;height:1px;background:#2d2d2d;"></div>
<div class="a" style="left:0;top:0;width:1870px;height:947px;overflow:hidden"><div class="a" style="left:1392px;top:712px;width:478px;height:1px;background:#2d2d2d;"></div><div class="a" style="left:1624px;top:694px;width:1px;height:18px;background:#2d2d2d;"></div><span class="a t" style="left:1396.5px;top:695px;color:#fafafa;letter-spacing:0.090px;margin-left:-0.5px;">GenerateMember</span><span class="a t" style="left:1628.5px;top:695px;color:#fafafa;letter-spacing:-0.181px;margin-left:-0.5px;">True</span><div class="a" style="left:1392px;top:731px;width:478px;height:1px;background:#2d2d2d;"></div><div class="a" style="left:1624px;top:713px;width:1px;height:18px;background:#2d2d2d;"></div><span class="a t" style="left:1396.5px;top:714px;color:#fafafa;letter-spacing:-0.104px;margin-left:-0.5px;">Locked</span><span class="a t" style="left:1628.5px;top:714px;color:#fafafa;letter-spacing:-0.706px;margin-left:-0.5px;">False</span><div class="a" style="left:1392px;top:750px;width:478px;height:1px;background:#2d2d2d;"></div><div class="a" style="left:1624px;top:732px;width:1px;height:18px;background:#2d2d2d;"></div><span class="a t" style="left:1396.5px;top:733px;color:#fafafa;letter-spacing:0.281px;margin-left:-0.5px;">Modifiers</span><span class="a t" style="left:1628.5px;top:733px;color:#fafafa;letter-spacing:-0.286px;margin-left:-0.5px;">Private</span><div class="a" style="left:1377px;top:750px;width:493px;height:20px;background:#2e2e2e;"></div><svg class="a" style="left:1380px;top:755px;" width="9" height="9" viewBox="0 0 9 9"><rect x="0.5" y="0.5" width="8" height="8" fill="#1f1f1f" stroke="#e0e0e0"/><path d="M2 4.5 H7" stroke="#e0e0e0"/></svg><span class="a t" style="left:1396.5px;top:752px;color:#fafafa;"><span class="c" style="font-weight:700">外觀</span></span><div class="a" style="left:1392px;top:788px;width:478px;height:1px;background:#2d2d2d;"></div><div class="a" style="left:1624px;top:770px;width:1px;height:18px;background:#2d2d2d;"></div><span class="a t" style="left:1396.5px;top:771px;color:#fafafa;letter-spacing:-0.181px;margin-left:-0.5px;">BackColor</span><div class="a" style="left:1626px;top:771px;width:20px;height:16px;background:#f0f0f0;border:1px solid #000;"></div><span class="a t" style="left:1654px;top:771px;color:#fafafa;letter-spacing:0.171px;margin-left:-0.5px;">Control</span><div class="a" style="left:1392px;top:807px;width:478px;height:1px;background:#2d2d2d;"></div><div class="a" style="left:1624px;top:789px;width:1px;height:18px;background:#2d2d2d;"></div><span class="a t" style="left:1396.5px;top:790px;color:#fafafa;letter-spacing:0.041px;margin-left:-0.5px;">BackgroundImage</span><div class="a" style="left:1626px;top:790px;width:20px;height:16px;background:#1f1f1f;border:1px solid #000;"></div><span class="a t" style="left:1654px;top:790px;color:#fafafa;letter-spacing:0.085px;margin-left:-0.5px;">(none)</span><div class="a" style="left:1392px;top:826px;width:478px;height:1px;background:#2d2d2d;"></div><div class="a" style="left:1624px;top:808px;width:1px;height:18px;background:#2d2d2d;"></div><span class="a t" style="left:1396.5px;top:809px;color:#fafafa;letter-spacing:0.044px;margin-left:-0.5px;">BackgroundImageLayout</span><span class="a t" style="left:1628.5px;top:809px;color:#fafafa;letter-spacing:-0.071px;margin-left:-0.5px;">Tile</span><div class="a" style="left:1392px;top:845px;width:478px;height:1px;background:#2d2d2d;"></div><div class="a" style="left:1624px;top:827px;width:1px;height:18px;background:#2d2d2d;"></div><span class="a t" style="left:1396.5px;top:828px;color:#fafafa;letter-spacing:-0.148px;margin-left:-0.5px;">Font</span><span class="a t" style="left:1628.5px;top:828px;color:#fafafa;letter-spacing:0.023px;margin-left:-0.5px;">Microsoft JhengHei UI, 9pt</span><svg class="a" style="left:1380px;top:831px;" width="9" height="9" viewBox="0 0 9 9"><rect x="0.5" y="0.5" width="8" height="8" fill="none" stroke="#e0e0e0"/><path d="M2 4.5 H7 M4.5 2 V7" stroke="#e0e0e0"/></svg><div class="a" style="left:1392px;top:864px;width:478px;height:1px;background:#2d2d2d;"></div><div class="a" style="left:1624px;top:846px;width:1px;height:18px;background:#2d2d2d;"></div><span class="a t" style="left:1396.5px;top:847px;color:#fafafa;letter-spacing:-0.176px;margin-left:-0.5px;">GripStyle</span><span class="a t" style="left:1628.5px;top:847px;color:#fafafa;letter-spacing:0.264px;margin-left:-0.5px;">Hidden</span><div class="a" style="left:1392px;top:883px;width:478px;height:1px;background:#2d2d2d;"></div><div class="a" style="left:1624px;top:865px;width:1px;height:18px;background:#2d2d2d;"></div><span class="a t" style="left:1396.5px;top:866px;color:#fafafa;letter-spacing:-0.141px;margin-left:-0.5px;">ImageScalingSize</span><span class="a t" style="left:1628.5px;top:866px;color:#fafafa;letter-spacing:-0.197px;margin-left:-0.5px;">16, 16</span><svg class="a" style="left:1380px;top:869px;" width="9" height="9" viewBox="0 0 9 9"><rect x="0.5" y="0.5" width="8" height="8" fill="none" stroke="#e0e0e0"/><path d="M2 4.5 H7 M4.5 2 V7" stroke="#e0e0e0"/></svg><div class="a" style="left:1392px;top:902px;width:478px;height:1px;background:#2d2d2d;"></div><div class="a" style="left:1624px;top:884px;width:1px;height:18px;background:#2d2d2d;"></div><span class="a t" style="left:1396.5px;top:885px;color:#fafafa;letter-spacing:0.214px;margin-left:-0.5px;">RenderMode</span><span class="a t" style="left:1628.5px;top:885px;color:#fafafa;letter-spacing:0.257px;margin-left:-0.5px;">ManagerRenderMode</span><div class="a" style="left:1392px;top:921px;width:478px;height:1px;background:#2d2d2d;"></div><div class="a" style="left:1624px;top:903px;width:1px;height:18px;background:#2d2d2d;"></div><span class="a t" style="left:1396.5px;top:904px;color:#fafafa;letter-spacing:0.174px;margin-left:-0.5px;">RightToLeft</span><span class="a t" style="left:1628.5px;top:904px;color:#fafafa;letter-spacing:0.591px;margin-left:-0.5px;">No</span><div class="a" style="left:1392px;top:940px;width:478px;height:1px;background:#2d2d2d;"></div><div class="a" style="left:1624px;top:922px;width:1px;height:18px;background:#2d2d2d;"></div><div class="a" style="left:1392px;top:922px;width:232px;height:18px;background:#3d3d3d;"></div><span class="a t" style="left:1396.5px;top:923px;color:#fafafa;letter-spacing:0.155px;margin-left:-0.5px;">Text</span><span class="a t" style="left:1628.5px;top:923px;color:#ffffff;letter-spacing:0.301px;margin-left:-0.5px;-webkit-text-stroke:0.45px #ffffff;">menuStrip1</span><div class="a" style="left:1392px;top:959px;width:478px;height:1px;background:#2d2d2d;"></div><div class="a" style="left:1624px;top:941px;width:1px;height:18px;background:#2d2d2d;"></div><span class="a t" style="left:1396.5px;top:942px;color:#fafafa;letter-spacing:0.343px;margin-left:-0.5px;">TextDirection</span><span class="a t" style="left:1628.5px;top:942px;color:#fafafa;letter-spacing:0.467px;margin-left:-0.5px;">Horizontal</span></div>
<div class="a" style="left:1870px;top:693px;width:18px;height:254px;background:#2e2e2e;"></div>
<div class="a" style="left:1377px;top:692px;width:511px;height:1px;background:#2d2d2d;"></div>
<svg class="a" style="left:1874.5px;top:699px;" width="9" height="5.5" viewBox="0 0 9 5.5"><path d="M0 5.5 L4.5 0 L9 5.5 Z" fill="#9a9a9a"/></svg>
<div class="a" style="left:1874px;top:719px;width:9px;height:57px;background:#4d4d4d;"></div>
<svg class="a" style="left:1874.5px;top:936px;" width="9" height="5.5" viewBox="0 0 9 5.5"><path d="M0 0 L4.5 5.5 L9 0 Z" fill="#9a9a9a"/></svg>
<div class="a" style="left:1377px;top:947px;width:511px;height:1px;background:#2d2d2d;"></div>
<span class="a t" style="left:1383.5px;top:953px;color:#ffffff;letter-spacing:0.380px;margin-left:-0.5px;-webkit-text-stroke:0.45px #ffffff;">Text</span>
<span class="a t" style="left:1383.5px;top:971.5px;color:#fafafa;"><span class="c">與控制項關聯的文字。</span></span>
<div class="a" style="left:0px;top:1017px;width:1920px;height:23px;background:#424242;"></div>
<svg class="a" style="left:4px;top:1021px;" width="17" height="17" viewBox="0 0 17 17"><path d="M0.7 0.7 H15.7 V12.5 H11 L8.1 15.6 L5.2 12.5 H0.7 Z" fill="#555555" stroke="#f0f0f0" stroke-width="1.3" stroke-linejoin="miter"/></svg>
<span class="a t" style="left:28.3px;top:1020.5px;color:#f4f4f4;"><span class="c">就緒</span></span>
<svg class="a" style="left:1149px;top:1020px;" width="16" height="16" viewBox="0 0 16 16"><rect x="4.5" y="4.5" width="11" height="11" fill="#4e4e4e" stroke="#d8d8d8" stroke-dasharray="1 1" stroke-dashoffset="0.5"/><path d="M4.5 0 V7 M0 4.5 H8" stroke="#f0f0f0" stroke-width="1"/></svg>
<span class="a t" style="left:1169.7px;top:1021px;color:#f4f4f4;letter-spacing:-0.318px;margin-left:-0.5px;">0 , 0</span>
<svg class="a" style="left:1309px;top:1020px;" width="16" height="16" viewBox="0 0 16 16"><rect x="6.5" y="6.5" width="9" height="9" fill="#4e4e4e" stroke="#d8d8d8" stroke-dasharray="1 1" stroke-dashoffset="0.5"/><path d="M15.5 0 V7 M1 7.5 H5.5 M0 15.5 H6.5" stroke="#f0f0f0" stroke-width="1"/><path d="M7 3 H13.6 M11.6 0.8 L13.8 3 L11.6 5.2 M2.5 8.6 V14 M0.6 12 L2.5 14.2 L4.4 12" fill="none" stroke="#55aaff" stroke-width="1.1"/></svg>
<span class="a t" style="left:1329.3px;top:1021px;color:#f4f4f4;letter-spacing:-0.211px;margin-left:-0.5px;">800 x 24</span>
<svg class="a" style="left:1766px;top:1021px;" width="15" height="15" viewBox="0 0 15 15"><path d="M7.5 0.6 L14.4 7.5 L7.5 14.4 L0.6 7.5 Z" fill="#e6e6e6"/><path d="M5.6 3.8 L9.6 7.8 M7.4 5.6 V10.6" stroke="#424242" stroke-width="1.2"/><circle cx="7.4" cy="10.6" r="1.2" fill="#424242"/><circle cx="10" cy="8" r="1.2" fill="#424242"/><circle cx="7.4" cy="5.4" r="1.1" fill="#424242"/></svg>
<span class="a t" style="left:1787.5px;top:1020.5px;color:#f4f4f4;"><span class="c">選取存放庫</span></span>
<svg class="a" style="left:1853px;top:1027px;" width="8" height="4" viewBox="0 0 8 4"><path d="M0 4 H8 L4 0 Z" fill="#e6e6e6"/></svg>
<svg class="a" style="left:1882.5px;top:1020.5px;" width="14" height="16" viewBox="0 0 14 16"><path d="M7 1 C4 1 2.8 3.4 2.8 6 V9.6 L1 12 H13 L11.2 9.6 V6 C11.2 3.4 10 1 7 1 Z" fill="#555555" stroke="#e6e6e6" stroke-width="1.1"/><path d="M5.4 13.4 C5.6 15.4 8.4 15.4 8.6 13.4" fill="none" stroke="#e6e6e6" stroke-width="1.1"/></svg>
<div class="a" style="left:1890px;top:1026.5px;width:12px;height:12px;background:#f5939f;border-radius:50%"></div>
<span class="a t" style="left:1890px;top:1024.5px;color:#10102a;font-size:10.5px;width:12px;text-align:center">2</span>
</body></html>
